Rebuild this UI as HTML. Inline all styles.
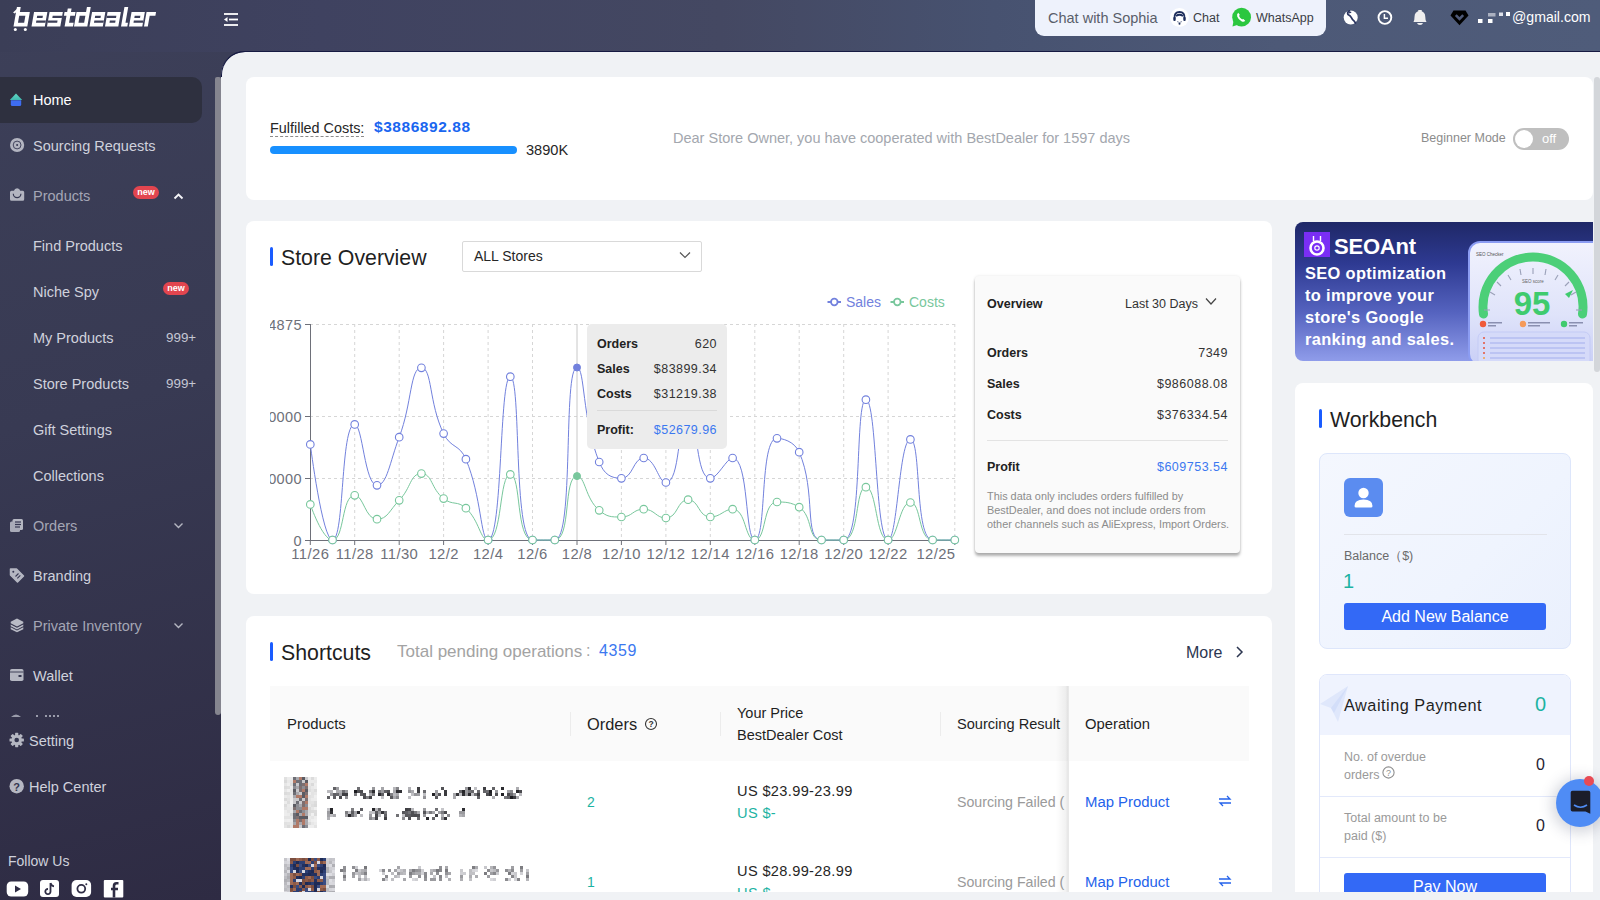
<!DOCTYPE html>
<html><head><meta charset="utf-8">
<style>
*{box-sizing:border-box;margin:0;padding:0}
html,body{width:1600px;height:900px;overflow:hidden;font-family:"Liberation Sans",sans-serif;background:#f0f2f5}
.abs{position:absolute}
#side{position:absolute;left:0;top:0;width:221px;height:900px;background:linear-gradient(165deg,#3d4059 0%,#383a53 45%,#2e2b43 100%)}
#head{position:absolute;left:0;top:0;width:1600px;height:52px;background:linear-gradient(90deg,#3b3e57 0%,#3f4260 20%,#444862 45%,#475270 62%,#4d5977 80%,#4f5c7a 100%)}
#main{position:absolute;left:221px;top:51px;width:1379px;height:849px;background:#f0f2f5;border-top-left-radius:24px;border-top:1px solid #161a42}
.card{position:absolute;background:#fff;border-radius:8px}
.nav{position:absolute;left:33px;font-size:14.5px;color:#cfd1dc;white-space:nowrap;line-height:18px}
.t{position:absolute;white-space:nowrap;line-height:1}
.ttl{position:absolute;font-size:21.3px;color:#1f1f1f;line-height:1;white-space:nowrap}
.bar{position:absolute;width:3px;height:19px;background:#1a5cff;border-radius:1.5px;margin-top:1px}
</style></head>
<body>
<div class="abs" style="left:190px;top:40px;width:80px;height:60px;background:#3b3e57"></div>
<div id="side"></div>
<div id="head"></div>
<div id="main"></div>
<div class="abs" style="left:221px;top:51px;width:40px;height:26px;border-top:1px solid #161a42;border-left:1px solid #161a42;border-top-left-radius:24px"></div>

<!-- sidebar -->
<div class="abs" style="left:0;top:77px;width:202px;height:46px;background:#2e303f;border-radius:0 10px 10px 0"></div>
<div class="nav" style="top:91px;color:#fff">Home</div>
<div class="nav" style="top:137px">Sourcing Requests</div>
<div class="nav" style="top:187px;color:#a4a6b5">Products</div>
<div class="nav" style="top:237px">Find Products</div>
<div class="nav" style="top:283px">Niche Spy</div>
<div class="nav" style="top:329px">My Products</div>
<div class="nav" style="top:375px">Store Products</div>
<div class="nav" style="top:421px">Gift Settings</div>
<div class="nav" style="top:467px">Collections</div>
<div class="nav" style="top:517px;color:#a4a6b5">Orders</div>
<div class="nav" style="top:567px">Branding</div>
<div class="nav" style="top:617px;color:#a4a6b5">Private Inventory</div>
<div class="nav" style="top:667px">Wallet</div>
<div class="nav" style="top:732px;left:29px">Setting</div>
<div class="nav" style="top:778px;left:29px">Help Center</div>
<div class="nav" style="top:852px;left:8px;font-size:14px">Follow Us</div>
<div class="abs" style="left:215px;top:77px;width:6px;height:638px;background:#85858f;border-radius:2px 2px 3px 3px"></div>


<!-- sidebar icons -->
<svg class="abs" style="left:0;top:0" width="221" height="900">
 <defs><linearGradient id="roof" x1="0" y1="0" x2="0" y2="1"><stop offset="0" stop-color="#62d6c2"/><stop offset="1" stop-color="#3fb9b0"/></linearGradient></defs>
 <path d="M16,93.6 L22.2,100 L9.8,100 Z" fill="url(#roof)"/>
 <path d="M10.8,100.3 H21.2 V104.5 Q21.2,106 19.7,106 H12.3 Q10.8,106 10.8,104.5 Z" fill="#3e6df2"/>
 <circle cx="17.1" cy="145" r="7.1" fill="#b3b5c1"/>
 <circle cx="17.1" cy="145" r="3.9" fill="none" stroke="#363852" stroke-width="0.9"/>
 <circle cx="17.1" cy="145" r="1" fill="#363852"/>
 <path d="M10,192.3 Q10,190.8 11.5,190.8 H14 Q14.5,188.3 17.1,188.3 Q19.7,188.3 20.2,190.8 H22.7 Q24.2,190.8 24.2,192.3 V199.3 Q24.2,200.8 22.7,200.8 H11.5 Q10,200.8 10,199.3 Z" fill="#b3b5c1"/>
 <path d="M13.3,193.8 A3.8,3.8 0 0 0 20.9,193.8" fill="none" stroke="#363852" stroke-width="1.2"/>
 <!-- orders -->
 <g fill="#b5b7c2">
  <rect x="12.5" y="519" width="10.5" height="11" rx="1.5"/>
  <rect x="10" y="521.5" width="10" height="10.5" rx="1.5" fill="#a9abb8"/>
 </g>
 <g stroke="#363852" stroke-width="1.2"><line x1="15" y1="522" x2="21" y2="522"/><line x1="15" y1="524.5" x2="21" y2="524.5"/><line x1="15" y1="527" x2="20" y2="527"/></g>
 <!-- branding tag -->
 <path d="M10.5,569 H16.5 L23.5,576 L17.5,582 L10.5,575 Z" fill="#b5b7c2" stroke="#b5b7c2" stroke-width="1.5" stroke-linejoin="round"/>
 <g stroke="#363852" stroke-width="1.1"><line x1="15.5" y1="576.5" x2="18.5" y2="573.5"/><line x1="17.3" y1="578.3" x2="20.3" y2="575.3"/></g>
 <circle cx="13.3" cy="571.8" r="1" fill="#363852"/>
 <!-- layers -->
 <g fill="#b9bbc6">
  <path d="M10.7,627.3 L17,630.5 L23.3,627.3 V629.2 L17,632.3 L10.7,629.2 Z"/>
  <path d="M10.7,624.5 L17,627.7 L23.3,624.5 V626.3 L17,629.5 L10.7,626.3 Z"/>
  <path d="M17,618.6 L23.3,621.8 V623.3 L17,626.5 L10.7,623.3 V621.8 Z"/>
 </g>
 <!-- wallet -->
 <rect x="10" y="669" width="13.5" height="12" rx="1.8" fill="#b5b7c2"/>
 <line x1="10" y1="672" x2="23.5" y2="672" stroke="#34364f" stroke-width="0.9"/>
 <rect x="18.5" y="675" width="3" height="2" fill="#34364f"/>
 <!-- clipped item -->
 <path d="M11,717 Q16,712 21,717 Z" fill="#9a9cab"/>
 <g fill="#9a9cab"><rect x="36" y="715" width="2" height="2"/><rect x="45" y="715" width="2" height="2"/><rect x="49" y="715" width="2" height="2"/><rect x="53" y="715" width="2" height="2"/><rect x="57" y="715" width="2" height="2"/></g>
 <!-- gear -->
 <g transform="translate(16.7,740)">
  <g fill="#b5b7c2">
   <circle r="5.2"/>
   <rect x="-1.6" y="-7.2" width="3.2" height="14.4" rx="0.6"/>
   <rect x="-1.6" y="-7.2" width="3.2" height="14.4" rx="0.6" transform="rotate(45)"/>
   <rect x="-1.6" y="-7.2" width="3.2" height="14.4" rx="0.6" transform="rotate(90)"/>
   <rect x="-1.6" y="-7.2" width="3.2" height="14.4" rx="0.6" transform="rotate(135)"/>
  </g>
  <circle r="2.3" fill="#34364f"/>
 </g>
 <circle cx="16.7" cy="786.2" r="7.2" fill="#b5b7c2"/>
 <text x="16.7" y="790.6" font-family="Liberation Sans" font-weight="bold" font-size="11" fill="#34364f" text-anchor="middle">?</text>
 <!-- social -->
 <rect x="6.7" y="881.5" width="21.5" height="15" rx="4.5" fill="#fff"/>
 <path d="M15,885.5 L21,889 L15,892.5 Z" fill="#2f2d45"/>
 <rect x="40" y="880" width="19" height="17" rx="3" fill="#fff"/>
 <path d="M50.5,883 V891.5 A2.6,2.6 0 1 1 48,889 M50.5,883 Q51.2,886 54,886.3" fill="none" stroke="#2f2d45" stroke-width="1.8"/>
 <rect x="71.6" y="880" width="19.5" height="17" rx="5" fill="#fff"/>
 <circle cx="81.3" cy="888.8" r="3.9" fill="none" stroke="#2f2d45" stroke-width="1.8"/>
 <circle cx="86.3" cy="884.2" r="1" fill="#2f2d45"/>
 <rect x="103.8" y="880" width="19.5" height="17.5" rx="1" fill="#fff"/>
 <path d="M118.5,883.2 H116.5 Q114,883.2 114,886 V897.5 M111,889 H118" fill="none" stroke="#2f2d45" stroke-width="2.6"/>
 <!-- chevrons -->
 <g fill="none" stroke="#f4f4f8" stroke-width="1.9">
  <path d="M174.5,198.5 L178.5,194.5 L182.5,198.5"/>
 </g>
 <g fill="none" stroke="#b5b7c2" stroke-width="1.4">
  <path d="M174.5,523.5 L178.5,527.5 L182.5,523.5"/>
  <path d="M174.5,623.5 L178.5,627.5 L182.5,623.5"/>
 </g>
 <!-- menu fold -->
</svg>
<div class="abs" style="left:133px;top:186px;width:26px;height:13px;background:#e2454f;border-radius:7px;color:#fff;font-size:9px;line-height:12px;text-align:center;font-weight:bold">new</div>
<div class="abs" style="left:163px;top:282px;width:26px;height:13px;background:#e2454f;border-radius:7px;color:#fff;font-size:9px;line-height:12px;text-align:center;font-weight:bold">new</div>
<div class="t" style="left:166px;top:331px;font-size:13.4px;color:#c5c7d3">999+</div>
<div class="t" style="left:166px;top:377px;font-size:13.4px;color:#c5c7d3">999+</div>

<!-- header -->
<svg class="abs" style="left:0;top:0" width="165" height="36">
 <g transform="translate(0,26.5) skewX(-10) translate(0,-26.5)">
  <path d="M13.50,7.00H17.30V26.50H13.50ZM13.50,12.00H27.30V26.50H13.50ZM31.50,12.00H44.80V26.50H31.50ZM47.00,12.00H60.30V26.50H47.00ZM64.60,8.50H68.40V26.50H64.60ZM62.00,12.00H73.00V15.80H62.00ZM64.60,22.70H73.00V26.50H64.60ZM83.50,7.00H87.30V26.50H83.50ZM74.00,12.00H87.30V26.50H74.00ZM89.50,12.00H102.80V26.50H89.50ZM105.00,12.00H118.30V26.50H105.00ZM121.00,7.00H124.80V26.50H121.00ZM121.00,22.70H127.30V26.50H121.00ZM129.00,12.00H142.30V26.50H129.00ZM144.00,12.00H147.80V26.50H144.00ZM144.00,12.00H153.50V15.80H144.00Z" fill="#fff"/>
  <path d="M17.30,15.80H23.50V22.70H17.30ZM35.30,15.80H41.00V17.90H35.30ZM35.30,20.50H44.80V22.70H35.30ZM50.80,15.80H60.30V17.90H50.80ZM47.00,20.50H56.50V22.70H47.00ZM77.80,15.80H83.50V22.70H77.80ZM93.30,15.80H99.00V17.90H93.30ZM93.30,20.50H102.80V22.70H93.30ZM105.00,15.80H114.50V17.90H105.00ZM108.80,20.50H114.50V22.70H108.80ZM132.80,15.80H138.50V17.90H132.80ZM132.80,20.50H142.30V22.70H132.80Z" fill="#3c3f58"/>
  <path d="M10.6,12.6 L14.2,8.4 L14.2,11.8 L12.4,13.6 Z" fill="#fff"/>
 </g>
 <circle cx="15.3" cy="29.6" r="1.5" fill="#fff"/><circle cx="25.3" cy="29.6" r="1.5" fill="#fff"/>
</svg>
<svg class="abs" style="left:222px;top:11px" width="20" height="18">
 <g stroke="#fff" stroke-width="1.8" fill="none">
  <line x1="2" y1="3" x2="16" y2="3"/><line x1="7" y1="8.5" x2="16" y2="8.5"/><line x1="2" y1="14" x2="16" y2="14"/>
 </g>
 <path d="M2,8.5 L5.5,6 V11 Z" fill="#fff"/>
</svg>
<div class="abs" style="left:1035px;top:-8px;width:291px;height:44px;background:#eef2fc;border-radius:9px"></div>
<div class="t" style="left:1048px;top:11px;font-size:14.5px;color:#595e6a">Chat with Sophia</div>
<svg class="abs" style="left:1168px;top:6px" width="90" height="24">
 <circle cx="11.5" cy="11.5" r="9.4" fill="#fff"/>
 <path d="M6.5,12.5 Q6,6 11.5,6 Q17,6 16.5,12.5" fill="none" stroke="#1f2f5c" stroke-width="1.8"/>
 <path d="M8,10 Q11.5,7.5 15,10" fill="none" stroke="#1f2f5c" stroke-width="2"/>
 <rect x="5.3" y="11" width="2.4" height="4" rx="1" fill="#1f2f5c"/><rect x="15.3" y="11" width="2.4" height="4" rx="1" fill="#1f2f5c"/>
 <path d="M9,15.5 Q11.5,17.5 14,15.5" fill="none" stroke="#8a93aa" stroke-width="1"/>
 <circle cx="11.5" cy="17.8" r="1" fill="#1f2f5c"/>
 <circle cx="73.6" cy="11.2" r="9.4" fill="#2bc73f"/>
 <path d="M65.5,15 L64.5,20.5 L70,18.8 Z" fill="#2bc73f"/>
 <path d="M70.2,6.8 Q68.6,8 69.2,10.4 Q70.4,13.8 73.8,15.6 Q76.2,16.4 77.2,14.8 L75.4,13 Q74.4,13.6 73.6,13 Q71.8,11.8 71.2,10.2 Q71,9.4 71.8,8.8 Z" fill="#fff"/>
</svg>
<div class="t" style="left:1193px;top:12px;font-size:12.5px;color:#3a3d45">Chat</div>
<div class="t" style="left:1256px;top:12px;font-size:12.5px;color:#3a3d45">WhatsApp</div>
<svg class="abs" style="left:1335px;top:0" width="140" height="35">
 <circle cx="15.7" cy="17.5" r="7" fill="#fff"/>
 <path d="M14.5,10.8 Q11.8,12.5 13,14.6 Q15.5,15.8 16.4,17.6 Q17.2,19.5 19.2,21.2 L20.5,23" fill="none" stroke="#2b3560" stroke-width="1.7" stroke-linecap="round"/><path d="M14,12.8 L16.2,12.2" stroke="#2b3560" stroke-width="1.2"/>
 <circle cx="49.9" cy="17.5" r="6.4" fill="none" stroke="#fff" stroke-width="1.9"/>
 <path d="M49.4,14 V18.3 H53" fill="none" stroke="#fff" stroke-width="1.5"/>
 <path d="M78.5,22 Q79.5,20.5 79.5,17 Q79.5,11.5 84.9,11 Q90.3,11.5 90.3,17 Q90.3,20.5 91.5,22 Z" fill="#eeeeee"/>
 <rect x="83" y="10" width="4" height="2" rx="1" fill="#eeeeee"/>
 <path d="M82,23 H88 Q87.5,25 85,25 Q82.5,25 82,23 Z" fill="#eeeeee"/>
 <path d="M118.5,10.5 H130.5 L133.5,15.5 L124.5,25.2 L115.5,15.5 Z" fill="#000"/>
 <path d="M120.8,15.2 L124.5,19 L128.2,15.2" fill="none" stroke="#4f5a78" stroke-width="2.6"/>
</svg>
<svg class="abs" style="left:1470px;top:0" width="45" height="35">
 <rect x="8" y="19" width="4.5" height="4" fill="#fff"/>
 <rect x="18" y="19" width="4.5" height="4" fill="#fff"/>
 <rect x="18" y="13" width="7.5" height="3.5" fill="#aab0c0"/>
 <rect x="29" y="12.5" width="4" height="3.5" fill="#dfe2ea"/>
 <rect x="36" y="12" width="4" height="4" fill="#fff"/>
</svg>
<div class="t" style="left:1512px;top:10px;font-size:14.1px;color:#fff">@gmail.com</div>

<!-- top card -->
<div class="card" style="left:246px;top:77px;width:1347px;height:123px"></div>
<div class="t" style="left:270px;top:121px;font-size:14.4px;color:#262626;border-bottom:1px dashed #8c8c8c;padding-bottom:1px">Fulfilled Costs:</div>
<div class="t" style="left:374px;top:119px;font-size:15.5px;color:#1a66f0;font-weight:bold;letter-spacing:0.55px">$3886892.88</div>
<div class="abs" style="left:270px;top:146px;width:247px;height:8px;background:#1890ff;border-radius:4px"></div>
<div class="t" style="left:526px;top:143px;font-size:14.6px;color:#262626">3890K</div>
<div class="t" style="left:673px;top:131px;font-size:14.5px;color:#a3a7ae">Dear Store Owner, you have cooperated with BestDealer for 1597 days</div>
<div class="t" style="left:1421px;top:132px;font-size:12.5px;color:#8c8c8c">Beginner Mode</div>
<div class="abs" style="left:1513px;top:128px;width:56px;height:22px;background:#bfbfbf;border-radius:11px"></div>
<div class="abs" style="left:1515px;top:130px;width:18px;height:18px;background:#fff;border-radius:50%"></div>
<div class="t" style="left:1542px;top:132px;font-size:13px;color:#fff">off</div>
<div class="abs" style="left:1594px;top:77px;width:6px;height:295px;background:#d3d6da;border-radius:3px"></div>

<!-- store overview -->
<div class="card" style="left:246px;top:221px;width:1026px;height:373px"></div>
<div class="bar" style="left:270px;top:246px"></div>
<div class="ttl" style="left:281px;top:248px">Store Overview</div>
<div class="abs" style="left:462px;top:241px;width:240px;height:31px;border:1px solid #d9d9d9;border-radius:2px"></div>
<div class="t" style="left:474px;top:249px;font-size:14px;color:#262626">ALL Stores</div>
<svg width="1600" height="900" style="position:absolute;left:0;top:0">
<g stroke="#d6d6d6" stroke-width="1" stroke-dasharray="3,3" fill="none">
<line x1="310" y1="324.5" x2="955" y2="324.5"/>
<line x1="310" y1="416.5" x2="955" y2="416.5"/>
<line x1="310" y1="478.5" x2="955" y2="478.5"/>
<line x1="354.7" y1="324" x2="354.7" y2="540"/>
<line x1="399.2" y1="324" x2="399.2" y2="540"/>
<line x1="443.6" y1="324" x2="443.6" y2="540"/>
<line x1="488.1" y1="324" x2="488.1" y2="540"/>
<line x1="532.5" y1="324" x2="532.5" y2="540"/>
<line x1="621.4" y1="324" x2="621.4" y2="540"/>
<line x1="665.9" y1="324" x2="665.9" y2="540"/>
<line x1="710.3" y1="324" x2="710.3" y2="540"/>
<line x1="754.8" y1="324" x2="754.8" y2="540"/>
<line x1="799.2" y1="324" x2="799.2" y2="540"/>
<line x1="843.7" y1="324" x2="843.7" y2="540"/>
<line x1="888.1" y1="324" x2="888.1" y2="540"/>
<line x1="954.8" y1="324" x2="954.8" y2="540"/>
</g>
<line x1="577.0" y1="324" x2="577.0" y2="540" stroke="#c8c8c8" stroke-width="1"/>
<g stroke="#6e7079" stroke-width="1" fill="none">
<line x1="310.5" y1="324" x2="310.5" y2="540"/>
<line x1="310" y1="540.5" x2="955" y2="540.5"/>
<line x1="305" y1="324.5" x2="310" y2="324.5"/>
<line x1="305" y1="416.5" x2="310" y2="416.5"/>
<line x1="305" y1="478.5" x2="310" y2="478.5"/>
<line x1="305" y1="540.5" x2="310" y2="540.5"/>
<line x1="310.3" y1="540" x2="310.3" y2="545"/>
<line x1="354.7" y1="540" x2="354.7" y2="545"/>
<line x1="399.2" y1="540" x2="399.2" y2="545"/>
<line x1="443.6" y1="540" x2="443.6" y2="545"/>
<line x1="488.1" y1="540" x2="488.1" y2="545"/>
<line x1="532.5" y1="540" x2="532.5" y2="545"/>
<line x1="577.0" y1="540" x2="577.0" y2="545"/>
<line x1="621.4" y1="540" x2="621.4" y2="545"/>
<line x1="665.9" y1="540" x2="665.9" y2="545"/>
<line x1="710.3" y1="540" x2="710.3" y2="545"/>
<line x1="754.8" y1="540" x2="754.8" y2="545"/>
<line x1="799.2" y1="540" x2="799.2" y2="545"/>
<line x1="843.7" y1="540" x2="843.7" y2="545"/>
<line x1="888.1" y1="540" x2="888.1" y2="545"/>
<line x1="954.8" y1="540" x2="954.8" y2="545"/>
</g>
<path d="M310.3,444.4C310.3,444.4 322.4,540.0 332.5,540.0C344.6,540.0 340.4,424.4 354.7,424.4C362.6,424.4 364.7,485.3 377.0,485.3C387.0,485.3 389.8,461.9 399.2,437.2C412.1,403.2 410.0,367.8 421.4,367.8C432.3,367.8 428.7,402.9 443.6,433.6C450.9,448.6 459.5,443.9 465.9,459.2C481.7,497.1 480.6,540.0 488.1,540.0C502.8,540.0 499.2,376.7 510.3,376.7C521.4,376.7 513.0,540.0 532.5,540.0C535.2,540.0 552.2,540.0 554.8,540.0C574.5,540.0 562.7,367.5 577.0,367.5C585.0,367.5 581.9,418.9 599.2,462.0C604.1,474.3 610.8,478.3 621.4,478.3C633.0,478.3 633.1,458.0 643.7,458.0C655.3,458.0 658.5,482.5 665.9,482.5C680.7,482.5 676.7,420.0 688.1,420.0C698.9,420.0 695.3,478.3 710.3,478.3C717.6,478.3 726.7,458.0 732.6,458.0C749.0,458.0 744.8,540.0 754.8,540.0C767.0,540.0 759.3,438.3 777.0,438.3C781.5,438.3 794.2,440.8 799.2,452.2C816.5,491.6 803.6,540.0 821.5,540.0C825.8,540.0 840.7,540.0 843.7,540.0C862.9,540.0 854.8,399.7 865.9,399.7C877.0,399.7 875.2,540.0 888.1,540.0C897.5,540.0 899.2,439.4 910.4,439.4C921.5,439.4 914.3,540.0 932.6,540.0C936.5,540.0 954.8,540.0 954.8,540.0" fill="none" stroke="#7281dd" stroke-width="1"/>
<path d="M310.3,504.4C310.3,504.4 322.4,540.0 332.5,540.0C344.6,540.0 341.3,495.3 354.7,495.3C363.5,495.3 365.2,519.2 377.0,519.2C387.5,519.2 389.1,510.7 399.2,500.3C411.3,487.9 410.1,473.6 421.4,473.6C432.3,473.6 430.8,488.6 443.6,498.6C453.0,505.9 457.3,500.2 465.9,508.2C479.6,520.9 480.1,540.0 488.1,540.0C502.3,540.0 499.2,474.4 510.3,474.4C521.4,474.4 515.7,540.0 532.5,540.0C537.9,540.0 549.3,540.0 554.8,540.0C571.5,540.0 563.1,476.1 577.0,476.1C585.3,476.1 585.1,498.5 599.2,510.3C607.3,517.0 610.4,517.0 621.4,517.0C632.6,517.0 632.6,509.2 643.7,509.2C654.9,509.2 655.8,518.0 665.9,518.0C678.0,518.0 676.9,499.7 688.1,499.7C699.1,499.7 698.2,517.0 710.3,517.0C720.5,517.0 724.1,509.2 732.6,509.2C746.3,509.2 744.5,540.0 754.8,540.0C766.7,540.0 762.4,502.0 777.0,502.0C784.6,502.0 791.1,502.0 799.2,507.2C813.3,516.2 807.2,540.0 821.5,540.0C829.4,540.0 837.5,540.0 843.7,540.0C859.7,540.0 854.8,487.2 865.9,487.2C877.0,487.2 875.5,540.0 888.1,540.0C897.7,540.0 899.2,502.5 910.4,502.5C921.5,502.5 917.9,540.0 932.6,540.0C940.1,540.0 954.8,540.0 954.8,540.0" fill="none" stroke="#78c79c" stroke-width="1"/>
<circle cx="310.3" cy="444.4" r="3.8" fill="#fff" stroke="#7281dd" stroke-width="1.1"/>
<circle cx="332.5" cy="540.0" r="3.8" fill="#fff" stroke="#7281dd" stroke-width="1.1"/>
<circle cx="354.7" cy="424.4" r="3.8" fill="#fff" stroke="#7281dd" stroke-width="1.1"/>
<circle cx="377.0" cy="485.3" r="3.8" fill="#fff" stroke="#7281dd" stroke-width="1.1"/>
<circle cx="399.2" cy="437.2" r="3.8" fill="#fff" stroke="#7281dd" stroke-width="1.1"/>
<circle cx="421.4" cy="367.8" r="3.8" fill="#fff" stroke="#7281dd" stroke-width="1.1"/>
<circle cx="443.6" cy="433.6" r="3.8" fill="#fff" stroke="#7281dd" stroke-width="1.1"/>
<circle cx="465.9" cy="459.2" r="3.8" fill="#fff" stroke="#7281dd" stroke-width="1.1"/>
<circle cx="488.1" cy="540.0" r="3.8" fill="#fff" stroke="#7281dd" stroke-width="1.1"/>
<circle cx="510.3" cy="376.7" r="3.8" fill="#fff" stroke="#7281dd" stroke-width="1.1"/>
<circle cx="532.5" cy="540.0" r="3.8" fill="#fff" stroke="#7281dd" stroke-width="1.1"/>
<circle cx="554.8" cy="540.0" r="3.8" fill="#fff" stroke="#7281dd" stroke-width="1.1"/>
<circle cx="577.0" cy="367.5" r="3.5" fill="#7281dd" stroke="#7281dd" stroke-width="1"/>
<circle cx="599.2" cy="462.0" r="3.8" fill="#fff" stroke="#7281dd" stroke-width="1.1"/>
<circle cx="621.4" cy="478.3" r="3.8" fill="#fff" stroke="#7281dd" stroke-width="1.1"/>
<circle cx="643.7" cy="458.0" r="3.8" fill="#fff" stroke="#7281dd" stroke-width="1.1"/>
<circle cx="665.9" cy="482.5" r="3.8" fill="#fff" stroke="#7281dd" stroke-width="1.1"/>
<circle cx="688.1" cy="420.0" r="3.8" fill="#fff" stroke="#7281dd" stroke-width="1.1"/>
<circle cx="710.3" cy="478.3" r="3.8" fill="#fff" stroke="#7281dd" stroke-width="1.1"/>
<circle cx="732.6" cy="458.0" r="3.8" fill="#fff" stroke="#7281dd" stroke-width="1.1"/>
<circle cx="754.8" cy="540.0" r="3.8" fill="#fff" stroke="#7281dd" stroke-width="1.1"/>
<circle cx="777.0" cy="438.3" r="3.8" fill="#fff" stroke="#7281dd" stroke-width="1.1"/>
<circle cx="799.2" cy="452.2" r="3.8" fill="#fff" stroke="#7281dd" stroke-width="1.1"/>
<circle cx="821.5" cy="540.0" r="3.8" fill="#fff" stroke="#7281dd" stroke-width="1.1"/>
<circle cx="843.7" cy="540.0" r="3.8" fill="#fff" stroke="#7281dd" stroke-width="1.1"/>
<circle cx="865.9" cy="399.7" r="3.8" fill="#fff" stroke="#7281dd" stroke-width="1.1"/>
<circle cx="888.1" cy="540.0" r="3.8" fill="#fff" stroke="#7281dd" stroke-width="1.1"/>
<circle cx="910.4" cy="439.4" r="3.8" fill="#fff" stroke="#7281dd" stroke-width="1.1"/>
<circle cx="932.6" cy="540.0" r="3.8" fill="#fff" stroke="#7281dd" stroke-width="1.1"/>
<circle cx="954.8" cy="540.0" r="3.8" fill="#fff" stroke="#7281dd" stroke-width="1.1"/>
<circle cx="310.3" cy="504.4" r="3.8" fill="#fff" stroke="#78c79c" stroke-width="1.1"/>
<circle cx="332.5" cy="540.0" r="3.8" fill="#fff" stroke="#78c79c" stroke-width="1.1"/>
<circle cx="354.7" cy="495.3" r="3.8" fill="#fff" stroke="#78c79c" stroke-width="1.1"/>
<circle cx="377.0" cy="519.2" r="3.8" fill="#fff" stroke="#78c79c" stroke-width="1.1"/>
<circle cx="399.2" cy="500.3" r="3.8" fill="#fff" stroke="#78c79c" stroke-width="1.1"/>
<circle cx="421.4" cy="473.6" r="3.8" fill="#fff" stroke="#78c79c" stroke-width="1.1"/>
<circle cx="443.6" cy="498.6" r="3.8" fill="#fff" stroke="#78c79c" stroke-width="1.1"/>
<circle cx="465.9" cy="508.2" r="3.8" fill="#fff" stroke="#78c79c" stroke-width="1.1"/>
<circle cx="488.1" cy="540.0" r="3.8" fill="#fff" stroke="#78c79c" stroke-width="1.1"/>
<circle cx="510.3" cy="474.4" r="3.8" fill="#fff" stroke="#78c79c" stroke-width="1.1"/>
<circle cx="532.5" cy="540.0" r="3.8" fill="#fff" stroke="#78c79c" stroke-width="1.1"/>
<circle cx="554.8" cy="540.0" r="3.8" fill="#fff" stroke="#78c79c" stroke-width="1.1"/>
<circle cx="577.0" cy="476.1" r="3.5" fill="#78c79c" stroke="#78c79c" stroke-width="1"/>
<circle cx="599.2" cy="510.3" r="3.8" fill="#fff" stroke="#78c79c" stroke-width="1.1"/>
<circle cx="621.4" cy="517.0" r="3.8" fill="#fff" stroke="#78c79c" stroke-width="1.1"/>
<circle cx="643.7" cy="509.2" r="3.8" fill="#fff" stroke="#78c79c" stroke-width="1.1"/>
<circle cx="665.9" cy="518.0" r="3.8" fill="#fff" stroke="#78c79c" stroke-width="1.1"/>
<circle cx="688.1" cy="499.7" r="3.8" fill="#fff" stroke="#78c79c" stroke-width="1.1"/>
<circle cx="710.3" cy="517.0" r="3.8" fill="#fff" stroke="#78c79c" stroke-width="1.1"/>
<circle cx="732.6" cy="509.2" r="3.8" fill="#fff" stroke="#78c79c" stroke-width="1.1"/>
<circle cx="754.8" cy="540.0" r="3.8" fill="#fff" stroke="#78c79c" stroke-width="1.1"/>
<circle cx="777.0" cy="502.0" r="3.8" fill="#fff" stroke="#78c79c" stroke-width="1.1"/>
<circle cx="799.2" cy="507.2" r="3.8" fill="#fff" stroke="#78c79c" stroke-width="1.1"/>
<circle cx="821.5" cy="540.0" r="3.8" fill="#fff" stroke="#78c79c" stroke-width="1.1"/>
<circle cx="843.7" cy="540.0" r="3.8" fill="#fff" stroke="#78c79c" stroke-width="1.1"/>
<circle cx="865.9" cy="487.2" r="3.8" fill="#fff" stroke="#78c79c" stroke-width="1.1"/>
<circle cx="888.1" cy="540.0" r="3.8" fill="#fff" stroke="#78c79c" stroke-width="1.1"/>
<circle cx="910.4" cy="502.5" r="3.8" fill="#fff" stroke="#78c79c" stroke-width="1.1"/>
<circle cx="932.6" cy="540.0" r="3.8" fill="#fff" stroke="#78c79c" stroke-width="1.1"/>
<circle cx="954.8" cy="540.0" r="3.8" fill="#fff" stroke="#78c79c" stroke-width="1.1"/>
<defs><clipPath id="yc"><rect x="270" y="300" width="40" height="260"/></clipPath></defs>
<g font-family="Liberation Sans" font-size="14.5" fill="#6e7079" letter-spacing="0.4" clip-path="url(#yc)" text-anchor="end">
<text x="302" y="329.5">174875</text>
<text x="302" y="421.5">100000</text>
<text x="302" y="483.5">50000</text>
<text x="302" y="545.5">0</text>
</g>
<g font-family="Liberation Sans" font-size="14.8" fill="#6e7079" letter-spacing="0.4" text-anchor="middle">
<text x="310.3" y="558.5">11/26</text>
<text x="354.7" y="558.5">11/28</text>
<text x="399.2" y="558.5">11/30</text>
<text x="443.6" y="558.5">12/2</text>
<text x="488.1" y="558.5">12/4</text>
<text x="532.5" y="558.5">12/6</text>
<text x="577.0" y="558.5">12/8</text>
<text x="621.4" y="558.5">12/10</text>
<text x="665.9" y="558.5">12/12</text>
<text x="710.3" y="558.5">12/14</text>
<text x="754.8" y="558.5">12/16</text>
<text x="799.2" y="558.5">12/18</text>
<text x="843.7" y="558.5">12/20</text>
<text x="888.1" y="558.5">12/22</text>
<text x="955.5" y="558.5" text-anchor="end">12/25</text>
</g>
</svg>


<svg class="abs" style="left:678px;top:250px" width="14" height="10"><path d="M2,2.5 L7,7.5 L12,2.5" fill="none" stroke="#555" stroke-width="1.2"/></svg>
<!-- legend -->
<svg class="abs" style="left:826px;top:294px" width="125" height="16">
 <line x1="1.5" y1="8" x2="15" y2="8" stroke="#7281dd" stroke-width="2"/><circle cx="8.3" cy="8" r="3.3" fill="#fff" stroke="#7281dd" stroke-width="1.8"/>
 <line x1="64.5" y1="8" x2="78" y2="8" stroke="#78c79c" stroke-width="2"/><circle cx="71.3" cy="8" r="3.3" fill="#fff" stroke="#78c79c" stroke-width="1.8"/>
</svg>
<div class="t" style="left:846px;top:295px;font-size:14px;color:#7281dd">Sales</div>
<div class="t" style="left:909px;top:295px;font-size:14px;color:#78c79c">Costs</div>
<!-- tooltip -->
<div class="abs" style="left:587px;top:324px;width:140px;height:125px;background:#ececec;border-radius:5px"></div>
<div class="t" style="left:597px;top:338px;font-size:12.5px;font-weight:bold;color:#222">Orders</div>
<div class="t" style="left:597px;top:363px;font-size:12.5px;font-weight:bold;color:#222">Sales</div>
<div class="t" style="left:597px;top:388px;font-size:12.5px;font-weight:bold;color:#222">Costs</div>
<div class="t" style="left:597px;top:424px;font-size:12.5px;font-weight:bold;color:#222">Profit:</div>
<div class="t" style="right:883px;top:338px;font-size:12.5px;color:#333;letter-spacing:0.45px">620</div>
<div class="t" style="right:883px;top:363px;font-size:12.5px;color:#333;letter-spacing:0.45px">$83899.34</div>
<div class="t" style="right:883px;top:388px;font-size:12.5px;color:#333;letter-spacing:0.45px">$31219.38</div>
<div class="t" style="right:883px;top:424px;font-size:12.5px;color:#3b78f0;letter-spacing:0.45px">$52679.96</div>
<div class="abs" style="left:597px;top:410px;width:120px;height:1px;background:#dadada"></div>
<!-- overview panel -->
<div class="abs" style="left:975px;top:276px;width:265px;height:277px;background:#fafafa;border-radius:4px;box-shadow:0 3px 3px rgba(0,0,0,0.3),0 0 3px rgba(0,0,0,0.1)"></div>
<div class="t" style="left:987px;top:298px;font-size:12.5px;font-weight:bold;color:#222">Overview</div>
<div class="t" style="left:1125px;top:298px;font-size:12.5px;color:#333">Last 30 Days</div>
<svg class="abs" style="left:1204px;top:297px" width="14" height="10"><path d="M2,1.5 L7,7 L12,1.5" fill="none" stroke="#444" stroke-width="1.2"/></svg>
<div class="t" style="left:987px;top:347px;font-size:12.5px;font-weight:bold;color:#222">Orders</div>
<div class="t" style="left:987px;top:378px;font-size:12.5px;font-weight:bold;color:#222">Sales</div>
<div class="t" style="left:987px;top:409px;font-size:12.5px;font-weight:bold;color:#222">Costs</div>
<div class="t" style="left:987px;top:461px;font-size:12.5px;font-weight:bold;color:#222">Profit</div>
<div class="t" style="right:372px;top:347px;font-size:12.5px;color:#333;letter-spacing:0.5px">7349</div>
<div class="t" style="right:372px;top:378px;font-size:12.5px;color:#333;letter-spacing:0.5px">$986088.08</div>
<div class="t" style="right:372px;top:409px;font-size:12.5px;color:#333;letter-spacing:0.5px">$376334.54</div>
<div class="t" style="right:372px;top:461px;font-size:12.5px;color:#3b78f0;letter-spacing:0.5px">$609753.54</div>
<div class="abs" style="left:987px;top:440px;width:241px;height:1px;background:#e3e3e3"></div>
<div class="abs" style="left:987px;top:489px;width:260px;font-size:10.9px;line-height:14px;color:#8c8c8c">This data only includes orders fulfilled by<br>BestDealer, and does not include orders from<br>other channels such as AliExpress, Import Orders.</div>

<!-- right column -->
<div class="abs" style="left:1295px;top:222px;width:298px;height:139px;border-radius:8px 0 0 8px;overflow:hidden;background:linear-gradient(180deg,#1f2867 0%,#2e3a92 30%,#5563bf 65%,#8f9cea 100%)">
 <div class="abs" style="left:173px;top:19px;width:140px;height:125px;background:linear-gradient(180deg,#f1f2fd 0%,#dfe3fa 60%,#c9cff6 100%);border:2px solid #8b9cf2;border-radius:12px"></div>
 <svg class="abs" style="left:0;top:0" width="298" height="139">
  <rect x="9" y="10" width="26" height="25" fill="#7a2ef5"/>
  <circle cx="22" cy="26" r="6.5" fill="none" stroke="#fff" stroke-width="2.6"/>
  <circle cx="22" cy="26" r="2.2" fill="none" stroke="#fff" stroke-width="1.2"/>
  <line x1="18.5" y1="14" x2="18.5" y2="19" stroke="#fff" stroke-width="1.4"/><line x1="25.5" y1="14" x2="25.5" y2="19" stroke="#fff" stroke-width="1.4"/>
  <g font-family="Liberation Sans" font-weight="bold" fill="#fff">
   <text x="39" y="32" font-size="22" letter-spacing="-0.2">SEOAnt</text>
   <g font-size="16.4" letter-spacing="0.35">
   <text x="10" y="57">SEO optimization</text>
   <text x="10" y="79">to improve your</text>
   <text x="10" y="101">store's Google</text>
   <text x="10" y="123">ranking and sales.</text>
   </g>
  </g>
  <text x="181" y="34" font-family="Liberation Sans" font-size="4.5" fill="#555">SEO Checker</text>
  <path d="M188.5,92 A50,50 0 1 1 287.5,92" fill="none" stroke="#4ccf78" stroke-width="9" stroke-linecap="round"/>
  <g stroke="#9aa0b8" stroke-width="1.1">
   <line x1="238" y1="46" x2="238" y2="52"/><line x1="213" y1="53" x2="216" y2="58"/><line x1="263" y1="53" x2="260" y2="58"/>
   <line x1="195" y1="70" x2="200" y2="73"/><line x1="281" y1="70" x2="276" y2="73"/><line x1="189" y1="88" x2="195" y2="88"/><line x1="287" y1="88" x2="281" y2="88"/>
   <line x1="225" y1="47" x2="226" y2="53"/><line x1="251" y1="47" x2="250" y2="53"/><line x1="202" y1="60" x2="206" y2="64"/><line x1="274" y1="60" x2="270" y2="64"/>
  </g>
  <path d="M270,72 L278,68 L274,76 Z" fill="#3fcb6e"/>
  <text x="237" y="92.5" font-family="Liberation Sans" font-weight="bold" font-size="33" fill="#3fcb6e" text-anchor="middle">95</text>
  <text x="238" y="61" font-family="Liberation Sans" font-size="4.5" fill="#666" text-anchor="middle">SEO score</text>
  <circle cx="188" cy="102" r="3.2" fill="#ef5a3a"/><circle cx="228" cy="102" r="3.2" fill="#f59a5a"/><circle cx="269" cy="102" r="3.2" fill="#3fcb6e"/>
  <g fill="#8a8fb0"><rect x="193" y="100" width="14" height="1.5"/><rect x="193" y="103" width="8" height="1.5"/><rect x="233" y="100" width="22" height="1.5"/><rect x="233" y="103" width="12" height="1.5"/><rect x="274" y="100" width="14" height="1.5"/><rect x="274" y="103" width="8" height="1.5"/></g>
  <rect x="183" y="110" width="112" height="34" rx="6" fill="#d5daf9" stroke="#c4cbf5"/>
  <g stroke="#b3bcf0" stroke-width="1.4"><line x1="195" y1="116" x2="290" y2="116"/><line x1="195" y1="121" x2="290" y2="121"/><line x1="195" y1="126" x2="290" y2="126"/><line x1="195" y1="131" x2="290" y2="131"/><line x1="195" y1="136" x2="290" y2="136"/></g>
  <g fill="#e5533a"><circle cx="189" cy="116" r="1"/><circle cx="189" cy="121" r="1"/><circle cx="189" cy="126" r="1"/><circle cx="189" cy="131" r="1"/><circle cx="189" cy="136" r="1" fill="#f0a050"/></g>
 </svg>
</div>
<div class="card" style="left:1295px;top:383px;width:298px;height:509px;border-radius:8px 8px 0 0"></div>
<div class="bar" style="left:1319px;top:408px"></div>
<div class="ttl" style="left:1330px;top:410px">Workbench</div>
<div class="abs" style="left:1319px;top:453px;width:252px;height:196px;background:linear-gradient(135deg,#f4f7fe 0%,#eff4fe 60%,#eaf0fd 100%);border:1px solid #dde6fb;border-radius:8px"></div>
<svg class="abs" style="left:1344px;top:478px" width="40" height="40">
 <rect width="39" height="39" rx="6" fill="#5b8cf0"/>
 <circle cx="19.5" cy="15" r="5.2" fill="#fff"/>
 <path d="M10.5,28 Q10.5,21.5 19.5,21.5 Q28.5,21.5 28.5,28 Q28.5,29.5 27,29.5 H12 Q10.5,29.5 10.5,28 Z" fill="#fff"/>
</svg>
<div class="abs" style="left:1344px;top:534px;width:203px;height:1px;background:#e2e4ea"></div>
<div class="t" style="left:1344px;top:550px;font-size:12.5px;color:#6b6b6b">Balance（$)</div>
<div class="t" style="left:1343px;top:571px;font-size:20px;color:#1db3a2">1</div>
<div class="abs" style="left:1344px;top:603px;width:202px;height:27px;background:#3369f6;border-radius:3px;color:#fff;font-size:16px;line-height:27px;text-align:center">Add New Balance</div>

<div class="abs" style="left:1319px;top:674px;width:252px;height:230px;background:#fff;border:1px solid #dfe6fb;border-radius:8px;overflow:hidden">
 <div class="abs" style="left:0;top:0;width:252px;height:60px;background:#eff3fe"></div>
 <div class="abs" style="left:0;top:121px;width:252px;height:1px;background:#e3e9fb"></div>
 <div class="abs" style="left:0;top:182px;width:252px;height:1px;background:#e3e9fb"></div>
</div>
<svg class="abs" style="left:1319px;top:685px" width="32" height="40"><path d="M29,1 L1,19 L12,23 L19,37 Z" fill="#dfe7fb"/><path d="M29,1 L12,23 L15,28 Z" fill="#d3def9"/></svg>
<div class="t" style="left:1344px;top:697px;font-size:16.3px;letter-spacing:0.5px;color:#1f1f1f">Awaiting Payment</div>
<div class="t" style="left:1535px;top:694px;font-size:20px;color:#1db3a2">0</div>
<div class="abs" style="left:1344px;top:748px;font-size:12.5px;line-height:18px;color:#9a9a9a">No. of overdue<br>orders</div>
<svg class="abs" style="left:1381px;top:765px" width="15" height="15"><circle cx="7.5" cy="7.5" r="5.6" fill="none" stroke="#8f8f8f" stroke-width="1.1"/><text x="7.5" y="10.8" font-family="Liberation Sans" font-size="9" fill="#8f8f8f" text-anchor="middle">?</text></svg>
<div class="t" style="left:1536px;top:757px;font-size:16px;color:#1f2233">0</div>
<div class="abs" style="left:1344px;top:809px;font-size:12.5px;line-height:18px;color:#9a9a9a">Total amount to be<br>paid ($)</div>
<div class="t" style="left:1536px;top:818px;font-size:16px;color:#1f2233">0</div>
<div class="abs" style="left:1344px;top:873px;width:202px;height:27px;background:#3369f6;border-radius:3px;color:#fff;font-size:16px;line-height:27px;text-align:center">Pay Now</div>
<!-- chat bubble -->
<div class="abs" style="left:1556px;top:779px;width:48px;height:48px;border-radius:50%;background:#4f8cf5;box-shadow:0 2px 14px 4px rgba(60,70,100,0.22)"></div>
<svg class="abs" style="left:1568px;top:788px" width="26" height="28"><path d="M2.7,4.5 Q2.7,2.7 4.5,2.7 H20.5 Q22.3,2.7 22.3,4.5 V25.8 L17.5,23.5 H4.5 Q2.7,23.5 2.7,21.7 Z" fill="#1b1d2a"/><path d="M6,17 Q12.5,21.5 19,17" fill="none" stroke="#4f8cf5" stroke-width="1.6"/></svg>
<div class="abs" style="left:1583.5px;top:775.5px;width:10px;height:10px;border-radius:50%;background:#e84b55"></div>
<!-- shortcuts -->
<div class="card" style="left:246px;top:616px;width:1026px;height:276px;border-radius:8px 8px 0 0"></div>
<div class="bar" style="left:270px;top:641px"></div>
<div class="ttl" style="left:281px;top:643px">Shortcuts</div>
<div class="t" style="left:397px;top:643px;font-size:17px;color:#a3a3a3">Total pending operations</div>
<div class="t" style="left:586px;top:643px;font-size:16px;color:#a3a3a3">:</div>
<div class="t" style="left:599px;top:643px;font-size:16px;color:#3b78f0;letter-spacing:0.6px">4359</div>
<div class="t" style="left:1186px;top:645px;font-size:16px;color:#2c3650">More</div>
<svg class="abs" style="left:1233px;top:644px" width="12" height="16"><path d="M4,3 L9,8 L4,13" fill="none" stroke="#2c3650" stroke-width="1.5"/></svg>
<div class="abs" style="left:270px;top:686px;width:978px;height:75px;background:#fafafa"></div>
<div class="abs" style="left:570px;top:712px;width:1px;height:24px;background:#ececec"></div>
<div class="abs" style="left:720px;top:712px;width:1px;height:24px;background:#ececec"></div>
<div class="abs" style="left:940px;top:712px;width:1px;height:24px;background:#ececec"></div>
<div class="t" style="left:287px;top:717px;font-size:14.9px;color:#1f1f1f">Products</div>
<div class="t" style="left:587px;top:716px;font-size:16.4px;color:#1f1f1f">Orders</div>
<svg class="abs" style="left:644px;top:717px" width="14" height="14"><circle cx="7" cy="7" r="5.5" fill="none" stroke="#333" stroke-width="1.1"/><text x="7" y="10.2" font-family="Liberation Sans" font-size="8.5" font-weight="bold" fill="#333" text-anchor="middle">?</text></svg>
<div class="t" style="left:737px;top:706px;font-size:14.5px;color:#1f1f1f">Your Price</div>
<div class="t" style="left:737px;top:728px;font-size:14.5px;color:#1f1f1f">BestDealer Cost</div>
<div class="t" style="left:957px;top:717px;font-size:14.6px;color:#1f1f1f">Sourcing Result</div>
<!-- rows -->
<div class="t" style="left:587px;top:795px;font-size:14px;color:#1db3a2">2</div>
<div class="t" style="left:737px;top:784px;font-size:14.6px;letter-spacing:0.35px;color:#262626">US $23.99-23.99</div>
<div class="t" style="left:737px;top:806px;font-size:14.6px;letter-spacing:0.35px;color:#1db3a2">US $-</div>
<div class="t" style="left:957px;top:795px;font-size:14.2px;color:#9a9a9a">Sourcing Failed (</div>
<div class="t" style="left:587px;top:875px;font-size:14px;color:#1db3a2">1</div>
<div class="t" style="left:737px;top:864px;font-size:14.6px;letter-spacing:0.35px;color:#262626">US $28.99-28.99</div>
<div class="t" style="left:737px;top:886px;font-size:14.6px;letter-spacing:0.35px;color:#1db3a2">US $</div>
<div class="t" style="left:957px;top:875px;font-size:14.2px;color:#9a9a9a">Sourcing Failed (</div>
<!-- operation fixed column -->
<div class="abs" style="left:1056px;top:686px;width:12px;height:215px;background:linear-gradient(90deg,rgba(0,0,0,0) 0%,rgba(0,0,0,0.05) 80%,rgba(0,0,0,0.1) 100%)"></div>
<div class="abs" style="left:1068px;top:686px;width:180px;height:215px;background:#fff;border-left:1px solid #e8e8e8">
 <div class="abs" style="left:0;top:0;width:180px;height:75px;background:#fafafa"></div>
</div>
<div class="t" style="left:1085px;top:717px;font-size:14.8px;color:#1f1f1f">Operation</div>
<div class="t" style="left:1085px;top:795px;font-size:14.9px;color:#2563eb">Map Product</div>
<div class="t" style="left:1085px;top:875px;font-size:14.9px;color:#2563eb">Map Product</div>
<svg class="abs" style="left:1217px;top:794px" width="16" height="14"><g fill="none" stroke="#2563eb" stroke-width="1.3"><path d="M2,5 H13 L10,2"/><path d="M14,9 H3 L6,12"/></g></svg>
<svg class="abs" style="left:1217px;top:874px" width="16" height="14"><g fill="none" stroke="#2563eb" stroke-width="1.3"><path d="M2,5 H13 L10,2"/><path d="M14,9 H3 L6,12"/></g></svg>
<!-- product thumbs (pixelated) -->
<svg class="abs" style="left:0;top:0" width="1600" height="900" shape-rendering="crispEdges">
<rect x="327" y="790" width="3" height="3" fill="rgb(186,186,190)"/>
<rect x="327" y="796" width="3" height="3" fill="rgb(95,95,99)"/>
<rect x="330" y="790" width="3" height="3" fill="rgb(180,180,184)"/>
<rect x="330" y="793" width="3" height="3" fill="rgb(154,154,158)"/>
<rect x="333" y="787" width="3" height="3" fill="rgb(98,98,102)"/>
<rect x="333" y="793" width="3" height="3" fill="rgb(95,95,99)"/>
<rect x="333" y="796" width="3" height="3" fill="rgb(95,95,99)"/>
<rect x="336" y="787" width="3" height="3" fill="rgb(157,157,161)"/>
<rect x="336" y="790" width="3" height="3" fill="rgb(172,172,176)"/>
<rect x="336" y="793" width="3" height="3" fill="rgb(103,103,107)"/>
<rect x="339" y="790" width="3" height="3" fill="rgb(177,177,181)"/>
<rect x="339" y="793" width="3" height="3" fill="rgb(163,163,167)"/>
<rect x="339" y="796" width="3" height="3" fill="rgb(73,73,77)"/>
<rect x="342" y="790" width="3" height="3" fill="rgb(110,110,114)"/>
<rect x="342" y="793" width="3" height="3" fill="rgb(62,62,66)"/>
<rect x="345" y="790" width="3" height="3" fill="rgb(152,152,156)"/>
<rect x="345" y="793" width="3" height="3" fill="rgb(62,62,66)"/>
<rect x="345" y="796" width="3" height="3" fill="rgb(143,143,147)"/>
<rect x="354" y="790" width="3" height="3" fill="rgb(28,28,32)"/>
<rect x="354" y="793" width="3" height="3" fill="rgb(123,123,127)"/>
<rect x="357" y="787" width="3" height="3" fill="rgb(111,111,115)"/>
<rect x="357" y="790" width="3" height="3" fill="rgb(81,81,85)"/>
<rect x="360" y="790" width="3" height="3" fill="rgb(76,76,80)"/>
<rect x="360" y="793" width="3" height="3" fill="rgb(96,96,100)"/>
<rect x="363" y="793" width="3" height="3" fill="rgb(82,82,86)"/>
<rect x="363" y="796" width="3" height="3" fill="rgb(75,75,79)"/>
<rect x="366" y="796" width="3" height="3" fill="rgb(129,129,133)"/>
<rect x="369" y="790" width="3" height="3" fill="rgb(116,116,120)"/>
<rect x="369" y="793" width="3" height="3" fill="rgb(175,175,179)"/>
<rect x="369" y="796" width="3" height="3" fill="rgb(64,64,68)"/>
<rect x="372" y="787" width="3" height="3" fill="rgb(152,152,156)"/>
<rect x="372" y="790" width="3" height="3" fill="rgb(46,46,50)"/>
<rect x="372" y="793" width="3" height="3" fill="rgb(118,118,122)"/>
<rect x="378" y="790" width="3" height="3" fill="rgb(124,124,128)"/>
<rect x="378" y="793" width="3" height="3" fill="rgb(44,44,48)"/>
<rect x="381" y="787" width="3" height="3" fill="rgb(165,165,169)"/>
<rect x="381" y="790" width="3" height="3" fill="rgb(155,155,159)"/>
<rect x="381" y="793" width="3" height="3" fill="rgb(94,94,98)"/>
<rect x="381" y="796" width="3" height="3" fill="rgb(194,194,198)"/>
<rect x="384" y="790" width="3" height="3" fill="rgb(98,98,102)"/>
<rect x="387" y="790" width="3" height="3" fill="rgb(80,80,84)"/>
<rect x="387" y="793" width="3" height="3" fill="rgb(42,42,46)"/>
<rect x="390" y="793" width="3" height="3" fill="rgb(127,127,131)"/>
<rect x="390" y="796" width="3" height="3" fill="rgb(87,87,91)"/>
<rect x="393" y="787" width="3" height="3" fill="rgb(183,183,187)"/>
<rect x="393" y="790" width="3" height="3" fill="rgb(167,167,171)"/>
<rect x="393" y="793" width="3" height="3" fill="rgb(186,186,190)"/>
<rect x="393" y="796" width="3" height="3" fill="rgb(169,169,173)"/>
<rect x="396" y="787" width="3" height="3" fill="rgb(133,133,137)"/>
<rect x="396" y="790" width="3" height="3" fill="rgb(46,46,50)"/>
<rect x="396" y="793" width="3" height="3" fill="rgb(169,169,173)"/>
<rect x="396" y="796" width="3" height="3" fill="rgb(135,135,139)"/>
<rect x="399" y="790" width="3" height="3" fill="rgb(50,50,54)"/>
<rect x="408" y="787" width="3" height="3" fill="rgb(177,177,181)"/>
<rect x="408" y="790" width="3" height="3" fill="rgb(149,149,153)"/>
<rect x="408" y="796" width="3" height="3" fill="rgb(191,191,195)"/>
<rect x="411" y="790" width="3" height="3" fill="rgb(170,170,174)"/>
<rect x="411" y="793" width="3" height="3" fill="rgb(190,190,194)"/>
<rect x="414" y="793" width="3" height="3" fill="rgb(150,150,154)"/>
<rect x="417" y="787" width="3" height="3" fill="rgb(63,63,67)"/>
<rect x="417" y="790" width="3" height="3" fill="rgb(62,62,66)"/>
<rect x="417" y="793" width="3" height="3" fill="rgb(157,157,161)"/>
<rect x="423" y="790" width="3" height="3" fill="rgb(107,107,111)"/>
<rect x="423" y="793" width="3" height="3" fill="rgb(190,190,194)"/>
<rect x="423" y="796" width="3" height="3" fill="rgb(147,147,151)"/>
<rect x="432" y="793" width="3" height="3" fill="rgb(35,35,39)"/>
<rect x="435" y="790" width="3" height="3" fill="rgb(157,157,161)"/>
<rect x="435" y="793" width="3" height="3" fill="rgb(161,161,165)"/>
<rect x="435" y="796" width="3" height="3" fill="rgb(88,88,92)"/>
<rect x="438" y="793" width="3" height="3" fill="rgb(83,83,87)"/>
<rect x="441" y="787" width="3" height="3" fill="rgb(82,82,86)"/>
<rect x="444" y="790" width="3" height="3" fill="rgb(60,60,64)"/>
<rect x="444" y="793" width="3" height="3" fill="rgb(58,58,62)"/>
<rect x="453" y="793" width="3" height="3" fill="rgb(166,166,170)"/>
<rect x="453" y="796" width="3" height="3" fill="rgb(169,169,173)"/>
<rect x="456" y="793" width="3" height="3" fill="rgb(54,54,58)"/>
<rect x="459" y="790" width="3" height="3" fill="rgb(101,101,105)"/>
<rect x="459" y="793" width="3" height="3" fill="rgb(192,192,196)"/>
<rect x="462" y="790" width="3" height="3" fill="rgb(36,36,40)"/>
<rect x="462" y="793" width="3" height="3" fill="rgb(46,46,50)"/>
<rect x="465" y="787" width="3" height="3" fill="rgb(152,152,156)"/>
<rect x="465" y="790" width="3" height="3" fill="rgb(154,154,158)"/>
<rect x="465" y="793" width="3" height="3" fill="rgb(150,150,154)"/>
<rect x="468" y="787" width="3" height="3" fill="rgb(40,40,44)"/>
<rect x="468" y="790" width="3" height="3" fill="rgb(117,117,121)"/>
<rect x="468" y="793" width="3" height="3" fill="rgb(41,41,45)"/>
<rect x="471" y="790" width="3" height="3" fill="rgb(104,104,108)"/>
<rect x="471" y="793" width="3" height="3" fill="rgb(191,191,195)"/>
<rect x="474" y="787" width="3" height="3" fill="rgb(194,194,198)"/>
<rect x="474" y="793" width="3" height="3" fill="rgb(114,114,118)"/>
<rect x="477" y="790" width="3" height="3" fill="rgb(106,106,110)"/>
<rect x="477" y="793" width="3" height="3" fill="rgb(61,61,65)"/>
<rect x="477" y="796" width="3" height="3" fill="rgb(99,99,103)"/>
<rect x="483" y="787" width="3" height="3" fill="rgb(63,63,67)"/>
<rect x="483" y="790" width="3" height="3" fill="rgb(99,99,103)"/>
<rect x="486" y="790" width="3" height="3" fill="rgb(109,109,113)"/>
<rect x="486" y="793" width="3" height="3" fill="rgb(77,77,81)"/>
<rect x="489" y="790" width="3" height="3" fill="rgb(34,34,38)"/>
<rect x="489" y="793" width="3" height="3" fill="rgb(45,45,49)"/>
<rect x="492" y="787" width="3" height="3" fill="rgb(99,99,103)"/>
<rect x="492" y="796" width="3" height="3" fill="rgb(174,174,178)"/>
<rect x="495" y="790" width="3" height="3" fill="rgb(154,154,158)"/>
<rect x="495" y="793" width="3" height="3" fill="rgb(81,81,85)"/>
<rect x="501" y="787" width="3" height="3" fill="rgb(44,44,48)"/>
<rect x="501" y="793" width="3" height="3" fill="rgb(33,33,37)"/>
<rect x="504" y="796" width="3" height="3" fill="rgb(121,121,125)"/>
<rect x="507" y="790" width="3" height="3" fill="rgb(161,161,165)"/>
<rect x="507" y="793" width="3" height="3" fill="rgb(72,72,76)"/>
<rect x="507" y="796" width="3" height="3" fill="rgb(100,100,104)"/>
<rect x="510" y="790" width="3" height="3" fill="rgb(138,138,142)"/>
<rect x="510" y="793" width="3" height="3" fill="rgb(107,107,111)"/>
<rect x="510" y="796" width="3" height="3" fill="rgb(27,27,31)"/>
<rect x="513" y="793" width="3" height="3" fill="rgb(149,149,153)"/>
<rect x="513" y="796" width="3" height="3" fill="rgb(62,62,66)"/>
<rect x="516" y="787" width="3" height="3" fill="rgb(172,172,176)"/>
<rect x="516" y="790" width="3" height="3" fill="rgb(40,40,44)"/>
<rect x="516" y="796" width="3" height="3" fill="rgb(169,169,173)"/>
<rect x="519" y="790" width="3" height="3" fill="rgb(75,75,79)"/>
<rect x="519" y="793" width="3" height="3" fill="rgb(185,185,189)"/>
<rect x="327" y="808" width="3" height="3" fill="rgb(195,195,199)"/>
<rect x="327" y="811" width="3" height="3" fill="rgb(155,155,159)"/>
<rect x="327" y="814" width="3" height="3" fill="rgb(162,162,166)"/>
<rect x="327" y="817" width="3" height="3" fill="rgb(178,178,182)"/>
<rect x="330" y="808" width="3" height="3" fill="rgb(37,37,41)"/>
<rect x="330" y="811" width="3" height="3" fill="rgb(50,50,54)"/>
<rect x="330" y="814" width="3" height="3" fill="rgb(191,191,195)"/>
<rect x="333" y="814" width="3" height="3" fill="rgb(168,168,172)"/>
<rect x="345" y="811" width="3" height="3" fill="rgb(126,126,130)"/>
<rect x="345" y="814" width="3" height="3" fill="rgb(154,154,158)"/>
<rect x="348" y="811" width="3" height="3" fill="rgb(195,195,199)"/>
<rect x="348" y="814" width="3" height="3" fill="rgb(40,40,44)"/>
<rect x="351" y="808" width="3" height="3" fill="rgb(125,125,129)"/>
<rect x="351" y="811" width="3" height="3" fill="rgb(93,93,97)"/>
<rect x="351" y="814" width="3" height="3" fill="rgb(109,109,113)"/>
<rect x="354" y="811" width="3" height="3" fill="rgb(163,163,167)"/>
<rect x="354" y="814" width="3" height="3" fill="rgb(165,165,169)"/>
<rect x="357" y="811" width="3" height="3" fill="rgb(38,38,42)"/>
<rect x="360" y="808" width="3" height="3" fill="rgb(96,96,100)"/>
<rect x="360" y="814" width="3" height="3" fill="rgb(189,189,193)"/>
<rect x="369" y="811" width="3" height="3" fill="rgb(190,190,194)"/>
<rect x="369" y="814" width="3" height="3" fill="rgb(154,154,158)"/>
<rect x="369" y="817" width="3" height="3" fill="rgb(139,139,143)"/>
<rect x="372" y="808" width="3" height="3" fill="rgb(38,38,42)"/>
<rect x="372" y="811" width="3" height="3" fill="rgb(192,192,196)"/>
<rect x="372" y="817" width="3" height="3" fill="rgb(168,168,172)"/>
<rect x="375" y="808" width="3" height="3" fill="rgb(184,184,188)"/>
<rect x="375" y="811" width="3" height="3" fill="rgb(92,92,96)"/>
<rect x="375" y="814" width="3" height="3" fill="rgb(72,72,76)"/>
<rect x="375" y="817" width="3" height="3" fill="rgb(66,66,70)"/>
<rect x="378" y="808" width="3" height="3" fill="rgb(103,103,107)"/>
<rect x="378" y="811" width="3" height="3" fill="rgb(149,149,153)"/>
<rect x="378" y="814" width="3" height="3" fill="rgb(184,184,188)"/>
<rect x="381" y="811" width="3" height="3" fill="rgb(53,53,57)"/>
<rect x="384" y="811" width="3" height="3" fill="rgb(118,118,122)"/>
<rect x="384" y="814" width="3" height="3" fill="rgb(98,98,102)"/>
<rect x="384" y="817" width="3" height="3" fill="rgb(64,64,68)"/>
<rect x="396" y="814" width="3" height="3" fill="rgb(113,113,117)"/>
<rect x="402" y="811" width="3" height="3" fill="rgb(86,86,90)"/>
<rect x="402" y="814" width="3" height="3" fill="rgb(192,192,196)"/>
<rect x="402" y="817" width="3" height="3" fill="rgb(139,139,143)"/>
<rect x="405" y="808" width="3" height="3" fill="rgb(63,63,67)"/>
<rect x="405" y="811" width="3" height="3" fill="rgb(96,96,100)"/>
<rect x="405" y="814" width="3" height="3" fill="rgb(88,88,92)"/>
<rect x="408" y="808" width="3" height="3" fill="rgb(69,69,73)"/>
<rect x="408" y="811" width="3" height="3" fill="rgb(116,116,120)"/>
<rect x="408" y="814" width="3" height="3" fill="rgb(91,91,95)"/>
<rect x="408" y="817" width="3" height="3" fill="rgb(79,79,83)"/>
<rect x="411" y="808" width="3" height="3" fill="rgb(185,185,189)"/>
<rect x="411" y="811" width="3" height="3" fill="rgb(80,80,84)"/>
<rect x="411" y="814" width="3" height="3" fill="rgb(78,78,82)"/>
<rect x="414" y="811" width="3" height="3" fill="rgb(120,120,124)"/>
<rect x="414" y="814" width="3" height="3" fill="rgb(74,74,78)"/>
<rect x="417" y="811" width="3" height="3" fill="rgb(174,174,178)"/>
<rect x="417" y="814" width="3" height="3" fill="rgb(77,77,81)"/>
<rect x="417" y="817" width="3" height="3" fill="rgb(106,106,110)"/>
<rect x="423" y="808" width="3" height="3" fill="rgb(154,154,158)"/>
<rect x="423" y="811" width="3" height="3" fill="rgb(86,86,90)"/>
<rect x="423" y="814" width="3" height="3" fill="rgb(151,151,155)"/>
<rect x="426" y="811" width="3" height="3" fill="rgb(178,178,182)"/>
<rect x="426" y="817" width="3" height="3" fill="rgb(40,40,44)"/>
<rect x="429" y="811" width="3" height="3" fill="rgb(123,123,127)"/>
<rect x="432" y="811" width="3" height="3" fill="rgb(164,164,168)"/>
<rect x="432" y="817" width="3" height="3" fill="rgb(104,104,108)"/>
<rect x="435" y="808" width="3" height="3" fill="rgb(113,113,117)"/>
<rect x="435" y="814" width="3" height="3" fill="rgb(65,65,69)"/>
<rect x="438" y="811" width="3" height="3" fill="rgb(160,160,164)"/>
<rect x="441" y="808" width="3" height="3" fill="rgb(197,197,201)"/>
<rect x="441" y="811" width="3" height="3" fill="rgb(125,125,129)"/>
<rect x="441" y="814" width="3" height="3" fill="rgb(175,175,179)"/>
<rect x="441" y="817" width="3" height="3" fill="rgb(146,146,150)"/>
<rect x="444" y="811" width="3" height="3" fill="rgb(76,76,80)"/>
<rect x="444" y="817" width="3" height="3" fill="rgb(48,48,52)"/>
<rect x="447" y="814" width="3" height="3" fill="rgb(137,137,141)"/>
<rect x="459" y="811" width="3" height="3" fill="rgb(153,153,157)"/>
<rect x="459" y="814" width="3" height="3" fill="rgb(181,181,185)"/>
<rect x="462" y="808" width="3" height="3" fill="rgb(46,46,50)"/>
<rect x="462" y="811" width="3" height="3" fill="rgb(155,155,159)"/>
<rect x="462" y="814" width="3" height="3" fill="rgb(167,167,171)"/>
<rect x="340" y="869" width="3" height="3" fill="rgb(125,125,129)"/>
<rect x="343" y="866" width="3" height="3" fill="rgb(144,144,148)"/>
<rect x="343" y="869" width="3" height="3" fill="rgb(142,142,146)"/>
<rect x="343" y="872" width="3" height="3" fill="rgb(189,189,193)"/>
<rect x="343" y="875" width="3" height="3" fill="rgb(124,124,128)"/>
<rect x="343" y="878" width="3" height="3" fill="rgb(170,170,174)"/>
<rect x="352" y="866" width="3" height="3" fill="rgb(143,143,147)"/>
<rect x="352" y="872" width="3" height="3" fill="rgb(152,152,156)"/>
<rect x="352" y="875" width="3" height="3" fill="rgb(162,162,166)"/>
<rect x="355" y="866" width="3" height="3" fill="rgb(202,202,206)"/>
<rect x="355" y="869" width="3" height="3" fill="rgb(126,126,130)"/>
<rect x="355" y="872" width="3" height="3" fill="rgb(196,196,200)"/>
<rect x="358" y="869" width="3" height="3" fill="rgb(199,199,203)"/>
<rect x="358" y="872" width="3" height="3" fill="rgb(184,184,188)"/>
<rect x="358" y="875" width="3" height="3" fill="rgb(194,194,198)"/>
<rect x="358" y="878" width="3" height="3" fill="rgb(160,160,164)"/>
<rect x="361" y="869" width="3" height="3" fill="rgb(176,176,180)"/>
<rect x="361" y="872" width="3" height="3" fill="rgb(165,165,169)"/>
<rect x="361" y="878" width="3" height="3" fill="rgb(212,212,216)"/>
<rect x="364" y="866" width="3" height="3" fill="rgb(120,120,124)"/>
<rect x="364" y="869" width="3" height="3" fill="rgb(167,167,171)"/>
<rect x="364" y="872" width="3" height="3" fill="rgb(130,130,134)"/>
<rect x="364" y="875" width="3" height="3" fill="rgb(191,191,195)"/>
<rect x="364" y="878" width="3" height="3" fill="rgb(178,178,182)"/>
<rect x="367" y="878" width="3" height="3" fill="rgb(215,215,219)"/>
<rect x="379" y="869" width="3" height="3" fill="rgb(211,211,215)"/>
<rect x="382" y="869" width="3" height="3" fill="rgb(139,139,143)"/>
<rect x="382" y="872" width="3" height="3" fill="rgb(203,203,207)"/>
<rect x="382" y="878" width="3" height="3" fill="rgb(134,134,138)"/>
<rect x="385" y="875" width="3" height="3" fill="rgb(139,139,143)"/>
<rect x="385" y="878" width="3" height="3" fill="rgb(206,206,210)"/>
<rect x="388" y="869" width="3" height="3" fill="rgb(146,146,150)"/>
<rect x="391" y="872" width="3" height="3" fill="rgb(188,188,192)"/>
<rect x="391" y="878" width="3" height="3" fill="rgb(192,192,196)"/>
<rect x="394" y="869" width="3" height="3" fill="rgb(164,164,168)"/>
<rect x="394" y="875" width="3" height="3" fill="rgb(186,186,190)"/>
<rect x="397" y="866" width="3" height="3" fill="rgb(165,165,169)"/>
<rect x="397" y="869" width="3" height="3" fill="rgb(216,216,220)"/>
<rect x="397" y="872" width="3" height="3" fill="rgb(152,152,156)"/>
<rect x="397" y="875" width="3" height="3" fill="rgb(199,199,203)"/>
<rect x="400" y="869" width="3" height="3" fill="rgb(195,195,199)"/>
<rect x="400" y="872" width="3" height="3" fill="rgb(181,181,185)"/>
<rect x="403" y="869" width="3" height="3" fill="rgb(178,178,182)"/>
<rect x="403" y="872" width="3" height="3" fill="rgb(189,189,193)"/>
<rect x="403" y="878" width="3" height="3" fill="rgb(168,168,172)"/>
<rect x="409" y="869" width="3" height="3" fill="rgb(171,171,175)"/>
<rect x="409" y="872" width="3" height="3" fill="rgb(128,128,132)"/>
<rect x="409" y="875" width="3" height="3" fill="rgb(155,155,159)"/>
<rect x="412" y="869" width="3" height="3" fill="rgb(126,126,130)"/>
<rect x="412" y="872" width="3" height="3" fill="rgb(158,158,162)"/>
<rect x="412" y="878" width="3" height="3" fill="rgb(216,216,220)"/>
<rect x="415" y="869" width="3" height="3" fill="rgb(146,146,150)"/>
<rect x="415" y="872" width="3" height="3" fill="rgb(173,173,177)"/>
<rect x="415" y="878" width="3" height="3" fill="rgb(207,207,211)"/>
<rect x="418" y="866" width="3" height="3" fill="rgb(202,202,206)"/>
<rect x="418" y="869" width="3" height="3" fill="rgb(152,152,156)"/>
<rect x="418" y="872" width="3" height="3" fill="rgb(171,171,175)"/>
<rect x="418" y="875" width="3" height="3" fill="rgb(145,145,149)"/>
<rect x="421" y="869" width="3" height="3" fill="rgb(207,207,211)"/>
<rect x="421" y="872" width="3" height="3" fill="rgb(210,210,214)"/>
<rect x="424" y="872" width="3" height="3" fill="rgb(140,140,144)"/>
<rect x="424" y="875" width="3" height="3" fill="rgb(136,136,140)"/>
<rect x="424" y="878" width="3" height="3" fill="rgb(147,147,151)"/>
<rect x="430" y="869" width="3" height="3" fill="rgb(186,186,190)"/>
<rect x="430" y="872" width="3" height="3" fill="rgb(170,170,174)"/>
<rect x="430" y="878" width="3" height="3" fill="rgb(155,155,159)"/>
<rect x="433" y="869" width="3" height="3" fill="rgb(171,171,175)"/>
<rect x="433" y="875" width="3" height="3" fill="rgb(199,199,203)"/>
<rect x="433" y="878" width="3" height="3" fill="rgb(157,157,161)"/>
<rect x="436" y="869" width="3" height="3" fill="rgb(121,121,125)"/>
<rect x="436" y="872" width="3" height="3" fill="rgb(142,142,146)"/>
<rect x="439" y="866" width="3" height="3" fill="rgb(145,145,149)"/>
<rect x="439" y="869" width="3" height="3" fill="rgb(136,136,140)"/>
<rect x="439" y="875" width="3" height="3" fill="rgb(134,134,138)"/>
<rect x="439" y="878" width="3" height="3" fill="rgb(146,146,150)"/>
<rect x="445" y="866" width="3" height="3" fill="rgb(168,168,172)"/>
<rect x="445" y="869" width="3" height="3" fill="rgb(124,124,128)"/>
<rect x="445" y="872" width="3" height="3" fill="rgb(148,148,152)"/>
<rect x="445" y="875" width="3" height="3" fill="rgb(194,194,198)"/>
<rect x="448" y="872" width="3" height="3" fill="rgb(166,166,170)"/>
<rect x="448" y="878" width="3" height="3" fill="rgb(177,177,181)"/>
<rect x="460" y="869" width="3" height="3" fill="rgb(202,202,206)"/>
<rect x="460" y="872" width="3" height="3" fill="rgb(208,208,212)"/>
<rect x="460" y="875" width="3" height="3" fill="rgb(155,155,159)"/>
<rect x="460" y="878" width="3" height="3" fill="rgb(176,176,180)"/>
<rect x="463" y="872" width="3" height="3" fill="rgb(205,205,209)"/>
<rect x="469" y="869" width="3" height="3" fill="rgb(190,190,194)"/>
<rect x="469" y="872" width="3" height="3" fill="rgb(193,193,197)"/>
<rect x="469" y="875" width="3" height="3" fill="rgb(174,174,178)"/>
<rect x="469" y="878" width="3" height="3" fill="rgb(194,194,198)"/>
<rect x="472" y="866" width="3" height="3" fill="rgb(126,126,130)"/>
<rect x="472" y="869" width="3" height="3" fill="rgb(212,212,216)"/>
<rect x="472" y="872" width="3" height="3" fill="rgb(193,193,197)"/>
<rect x="475" y="866" width="3" height="3" fill="rgb(171,171,175)"/>
<rect x="475" y="869" width="3" height="3" fill="rgb(218,218,222)"/>
<rect x="475" y="875" width="3" height="3" fill="rgb(173,173,177)"/>
<rect x="484" y="866" width="3" height="3" fill="rgb(199,199,203)"/>
<rect x="484" y="872" width="3" height="3" fill="rgb(124,124,128)"/>
<rect x="487" y="869" width="3" height="3" fill="rgb(139,139,143)"/>
<rect x="487" y="875" width="3" height="3" fill="rgb(158,158,162)"/>
<rect x="490" y="866" width="3" height="3" fill="rgb(181,181,185)"/>
<rect x="490" y="869" width="3" height="3" fill="rgb(198,198,202)"/>
<rect x="490" y="872" width="3" height="3" fill="rgb(157,157,161)"/>
<rect x="490" y="878" width="3" height="3" fill="rgb(217,217,221)"/>
<rect x="493" y="866" width="3" height="3" fill="rgb(149,149,153)"/>
<rect x="493" y="869" width="3" height="3" fill="rgb(187,187,191)"/>
<rect x="493" y="872" width="3" height="3" fill="rgb(137,137,141)"/>
<rect x="493" y="878" width="3" height="3" fill="rgb(208,208,212)"/>
<rect x="496" y="869" width="3" height="3" fill="rgb(153,153,157)"/>
<rect x="496" y="872" width="3" height="3" fill="rgb(202,202,206)"/>
<rect x="505" y="869" width="3" height="3" fill="rgb(142,142,146)"/>
<rect x="505" y="878" width="3" height="3" fill="rgb(140,140,144)"/>
<rect x="508" y="869" width="3" height="3" fill="rgb(179,179,183)"/>
<rect x="508" y="872" width="3" height="3" fill="rgb(122,122,126)"/>
<rect x="508" y="878" width="3" height="3" fill="rgb(207,207,211)"/>
<rect x="511" y="866" width="3" height="3" fill="rgb(160,160,164)"/>
<rect x="511" y="869" width="3" height="3" fill="rgb(140,140,144)"/>
<rect x="511" y="872" width="3" height="3" fill="rgb(213,213,217)"/>
<rect x="511" y="875" width="3" height="3" fill="rgb(136,136,140)"/>
<rect x="514" y="872" width="3" height="3" fill="rgb(201,201,205)"/>
<rect x="514" y="875" width="3" height="3" fill="rgb(202,202,206)"/>
<rect x="514" y="878" width="3" height="3" fill="rgb(212,212,216)"/>
<rect x="517" y="878" width="3" height="3" fill="rgb(133,133,137)"/>
<rect x="520" y="866" width="3" height="3" fill="rgb(125,125,129)"/>
<rect x="520" y="869" width="3" height="3" fill="rgb(157,157,161)"/>
<rect x="520" y="872" width="3" height="3" fill="rgb(210,210,214)"/>
<rect x="526" y="869" width="3" height="3" fill="rgb(198,198,202)"/>
<rect x="526" y="872" width="3" height="3" fill="rgb(161,161,165)"/>
<rect x="526" y="875" width="3" height="3" fill="rgb(123,123,127)"/>
<rect x="526" y="878" width="3" height="3" fill="rgb(182,182,186)"/>
<rect x="284" y="777" width="33" height="50" fill="#e9e9e9"/>
<rect x="284" y="777" width="3" height="3" fill="rgb(225,225,225)"/>
<rect x="287" y="777" width="3" height="3" fill="rgb(236,236,236)"/>
<rect x="290" y="777" width="3" height="3" fill="rgb(235,235,235)"/>
<rect x="293" y="777" width="3" height="3" fill="#6e6e75"/>
<rect x="296" y="777" width="3" height="3" fill="#a8a8ad"/>
<rect x="299" y="777" width="3" height="3" fill="#b07a68"/>
<rect x="302" y="777" width="3" height="3" fill="#5b5b62"/>
<rect x="305" y="777" width="3" height="3" fill="#c9c9cc"/>
<rect x="308" y="777" width="3" height="3" fill="rgb(236,236,236)"/>
<rect x="311" y="777" width="3" height="3" fill="rgb(220,220,220)"/>
<rect x="314" y="777" width="3" height="3" fill="rgb(237,237,237)"/>
<rect x="284" y="780" width="3" height="3" fill="rgb(218,218,218)"/>
<rect x="287" y="780" width="3" height="3" fill="rgb(233,233,233)"/>
<rect x="290" y="780" width="3" height="3" fill="rgb(226,226,226)"/>
<rect x="293" y="780" width="3" height="3" fill="#b07a68"/>
<rect x="296" y="780" width="3" height="3" fill="#6e6e75"/>
<rect x="299" y="780" width="3" height="3" fill="#6e6e75"/>
<rect x="302" y="780" width="3" height="3" fill="#c9c9cc"/>
<rect x="305" y="780" width="3" height="3" fill="#5b5b62"/>
<rect x="308" y="780" width="3" height="3" fill="rgb(235,235,235)"/>
<rect x="311" y="780" width="3" height="3" fill="rgb(235,235,235)"/>
<rect x="314" y="780" width="3" height="3" fill="rgb(233,233,233)"/>
<rect x="284" y="783" width="3" height="3" fill="rgb(230,230,230)"/>
<rect x="287" y="783" width="3" height="3" fill="rgb(238,238,238)"/>
<rect x="290" y="783" width="3" height="3" fill="rgb(222,222,222)"/>
<rect x="293" y="783" width="3" height="3" fill="#6e6e75"/>
<rect x="296" y="783" width="3" height="3" fill="#c9c9cc"/>
<rect x="299" y="783" width="3" height="3" fill="#6e6e75"/>
<rect x="302" y="783" width="3" height="3" fill="#7d6f70"/>
<rect x="305" y="783" width="3" height="3" fill="#b07a68"/>
<rect x="308" y="783" width="3" height="3" fill="rgb(230,230,230)"/>
<rect x="311" y="783" width="3" height="3" fill="rgb(218,218,218)"/>
<rect x="314" y="783" width="3" height="3" fill="rgb(239,239,239)"/>
<rect x="284" y="786" width="3" height="3" fill="rgb(220,220,220)"/>
<rect x="287" y="786" width="3" height="3" fill="rgb(223,223,223)"/>
<rect x="290" y="786" width="3" height="3" fill="rgb(236,236,236)"/>
<rect x="293" y="786" width="3" height="3" fill="#8d8d93"/>
<rect x="296" y="786" width="3" height="3" fill="#a8a8ad"/>
<rect x="299" y="786" width="3" height="3" fill="#7d6f70"/>
<rect x="302" y="786" width="3" height="3" fill="#8d8d93"/>
<rect x="305" y="786" width="3" height="3" fill="#7d6f70"/>
<rect x="308" y="786" width="3" height="3" fill="rgb(226,226,226)"/>
<rect x="311" y="786" width="3" height="3" fill="rgb(233,233,233)"/>
<rect x="314" y="786" width="3" height="3" fill="rgb(237,237,237)"/>
<rect x="284" y="789" width="3" height="3" fill="rgb(230,230,230)"/>
<rect x="287" y="789" width="3" height="3" fill="rgb(240,240,240)"/>
<rect x="290" y="789" width="3" height="3" fill="rgb(231,231,231)"/>
<rect x="293" y="789" width="3" height="3" fill="#5b5b62"/>
<rect x="296" y="789" width="3" height="3" fill="#c9c9cc"/>
<rect x="299" y="789" width="3" height="3" fill="#7d6f70"/>
<rect x="302" y="789" width="3" height="3" fill="#b07a68"/>
<rect x="305" y="789" width="3" height="3" fill="#5b5b62"/>
<rect x="308" y="789" width="3" height="3" fill="rgb(222,222,222)"/>
<rect x="311" y="789" width="3" height="3" fill="rgb(229,229,229)"/>
<rect x="314" y="789" width="3" height="3" fill="rgb(221,221,221)"/>
<rect x="284" y="792" width="3" height="3" fill="rgb(219,219,219)"/>
<rect x="287" y="792" width="3" height="3" fill="rgb(222,222,222)"/>
<rect x="290" y="792" width="3" height="3" fill="rgb(233,233,233)"/>
<rect x="293" y="792" width="3" height="3" fill="#6e6e75"/>
<rect x="296" y="792" width="3" height="3" fill="#a8a8ad"/>
<rect x="299" y="792" width="3" height="3" fill="#c9c9cc"/>
<rect x="302" y="792" width="3" height="3" fill="#5b5b62"/>
<rect x="305" y="792" width="3" height="3" fill="#7d6f70"/>
<rect x="308" y="792" width="3" height="3" fill="rgb(238,238,238)"/>
<rect x="311" y="792" width="3" height="3" fill="rgb(227,227,227)"/>
<rect x="314" y="792" width="3" height="3" fill="rgb(231,231,231)"/>
<rect x="284" y="795" width="3" height="3" fill="rgb(234,234,234)"/>
<rect x="287" y="795" width="3" height="3" fill="rgb(230,230,230)"/>
<rect x="290" y="795" width="3" height="3" fill="rgb(236,236,236)"/>
<rect x="293" y="795" width="3" height="3" fill="#a8a8ad"/>
<rect x="296" y="795" width="3" height="3" fill="#b07a68"/>
<rect x="299" y="795" width="3" height="3" fill="#b07a68"/>
<rect x="302" y="795" width="3" height="3" fill="#5b5b62"/>
<rect x="305" y="795" width="3" height="3" fill="#b07a68"/>
<rect x="308" y="795" width="3" height="3" fill="rgb(225,225,225)"/>
<rect x="311" y="795" width="3" height="3" fill="rgb(228,228,228)"/>
<rect x="314" y="795" width="3" height="3" fill="rgb(239,239,239)"/>
<rect x="284" y="798" width="3" height="3" fill="rgb(218,218,218)"/>
<rect x="287" y="798" width="3" height="3" fill="rgb(226,226,226)"/>
<rect x="290" y="798" width="3" height="3" fill="rgb(237,237,237)"/>
<rect x="293" y="798" width="3" height="3" fill="#c9c9cc"/>
<rect x="296" y="798" width="3" height="3" fill="#c9c9cc"/>
<rect x="299" y="798" width="3" height="3" fill="#6e6e75"/>
<rect x="302" y="798" width="3" height="3" fill="#c9c9cc"/>
<rect x="305" y="798" width="3" height="3" fill="#7d6f70"/>
<rect x="308" y="798" width="3" height="3" fill="rgb(228,228,228)"/>
<rect x="311" y="798" width="3" height="3" fill="rgb(235,235,235)"/>
<rect x="314" y="798" width="3" height="3" fill="rgb(236,236,236)"/>
<rect x="284" y="801" width="3" height="3" fill="rgb(236,236,236)"/>
<rect x="287" y="801" width="3" height="3" fill="rgb(221,221,221)"/>
<rect x="290" y="801" width="3" height="3" fill="rgb(240,240,240)"/>
<rect x="293" y="801" width="3" height="3" fill="#c9c9cc"/>
<rect x="296" y="801" width="3" height="3" fill="#6e6e75"/>
<rect x="299" y="801" width="3" height="3" fill="#c9c9cc"/>
<rect x="302" y="801" width="3" height="3" fill="#7d6f70"/>
<rect x="305" y="801" width="3" height="3" fill="#b07a68"/>
<rect x="308" y="801" width="3" height="3" fill="rgb(226,226,226)"/>
<rect x="311" y="801" width="3" height="3" fill="rgb(227,227,227)"/>
<rect x="314" y="801" width="3" height="3" fill="rgb(221,221,221)"/>
<rect x="284" y="804" width="3" height="3" fill="rgb(220,220,220)"/>
<rect x="287" y="804" width="3" height="3" fill="rgb(233,233,233)"/>
<rect x="290" y="804" width="3" height="3" fill="rgb(238,238,238)"/>
<rect x="293" y="804" width="3" height="3" fill="#5b5b62"/>
<rect x="296" y="804" width="3" height="3" fill="#8d8d93"/>
<rect x="299" y="804" width="3" height="3" fill="#a8a8ad"/>
<rect x="302" y="804" width="3" height="3" fill="#7d6f70"/>
<rect x="305" y="804" width="3" height="3" fill="#8d8d93"/>
<rect x="308" y="804" width="3" height="3" fill="rgb(231,231,231)"/>
<rect x="311" y="804" width="3" height="3" fill="rgb(222,222,222)"/>
<rect x="314" y="804" width="3" height="3" fill="rgb(218,218,218)"/>
<rect x="284" y="807" width="3" height="3" fill="rgb(227,227,227)"/>
<rect x="287" y="807" width="3" height="3" fill="rgb(231,231,231)"/>
<rect x="290" y="807" width="3" height="3" fill="rgb(231,231,231)"/>
<rect x="293" y="807" width="3" height="3" fill="#7d6f70"/>
<rect x="296" y="807" width="3" height="3" fill="#8d8d93"/>
<rect x="299" y="807" width="3" height="3" fill="#8d8d93"/>
<rect x="302" y="807" width="3" height="3" fill="#b07a68"/>
<rect x="305" y="807" width="3" height="3" fill="#b07a68"/>
<rect x="308" y="807" width="3" height="3" fill="rgb(219,219,219)"/>
<rect x="311" y="807" width="3" height="3" fill="rgb(230,230,230)"/>
<rect x="314" y="807" width="3" height="3" fill="rgb(240,240,240)"/>
<rect x="284" y="810" width="3" height="3" fill="rgb(236,236,236)"/>
<rect x="287" y="810" width="3" height="3" fill="rgb(228,228,228)"/>
<rect x="290" y="810" width="3" height="3" fill="rgb(235,235,235)"/>
<rect x="293" y="810" width="3" height="3" fill="#a8a8ad"/>
<rect x="296" y="810" width="3" height="3" fill="#b07a68"/>
<rect x="299" y="810" width="3" height="3" fill="#6e6e75"/>
<rect x="302" y="810" width="3" height="3" fill="#8d8d93"/>
<rect x="305" y="810" width="3" height="3" fill="#a8a8ad"/>
<rect x="308" y="810" width="3" height="3" fill="rgb(218,218,218)"/>
<rect x="311" y="810" width="3" height="3" fill="rgb(220,220,220)"/>
<rect x="314" y="810" width="3" height="3" fill="rgb(221,221,221)"/>
<rect x="284" y="813" width="3" height="3" fill="rgb(237,237,237)"/>
<rect x="287" y="813" width="3" height="3" fill="rgb(235,235,235)"/>
<rect x="290" y="813" width="3" height="3" fill="rgb(219,219,219)"/>
<rect x="293" y="813" width="3" height="3" fill="#6e6e75"/>
<rect x="296" y="813" width="3" height="3" fill="#5b5b62"/>
<rect x="299" y="813" width="3" height="3" fill="#a8a8ad"/>
<rect x="302" y="813" width="3" height="3" fill="#b07a68"/>
<rect x="305" y="813" width="3" height="3" fill="#a8a8ad"/>
<rect x="308" y="813" width="3" height="3" fill="rgb(222,222,222)"/>
<rect x="311" y="813" width="3" height="3" fill="rgb(240,240,240)"/>
<rect x="314" y="813" width="3" height="3" fill="rgb(219,219,219)"/>
<rect x="284" y="816" width="3" height="3" fill="rgb(228,228,228)"/>
<rect x="287" y="816" width="3" height="3" fill="rgb(228,228,228)"/>
<rect x="290" y="816" width="3" height="3" fill="rgb(229,229,229)"/>
<rect x="293" y="816" width="3" height="3" fill="#6e6e75"/>
<rect x="296" y="816" width="3" height="3" fill="#7d6f70"/>
<rect x="299" y="816" width="3" height="3" fill="#5b5b62"/>
<rect x="302" y="816" width="3" height="3" fill="#5b5b62"/>
<rect x="305" y="816" width="3" height="3" fill="#5b5b62"/>
<rect x="308" y="816" width="3" height="3" fill="rgb(234,234,234)"/>
<rect x="311" y="816" width="3" height="3" fill="rgb(230,230,230)"/>
<rect x="314" y="816" width="3" height="3" fill="rgb(238,238,238)"/>
<rect x="284" y="819" width="3" height="3" fill="rgb(237,237,237)"/>
<rect x="287" y="819" width="3" height="3" fill="rgb(239,239,239)"/>
<rect x="290" y="819" width="3" height="3" fill="rgb(235,235,235)"/>
<rect x="293" y="819" width="3" height="3" fill="#8d8d93"/>
<rect x="296" y="819" width="3" height="3" fill="#b07a68"/>
<rect x="299" y="819" width="3" height="3" fill="#7d6f70"/>
<rect x="302" y="819" width="3" height="3" fill="#b07a68"/>
<rect x="305" y="819" width="3" height="3" fill="#a8a8ad"/>
<rect x="308" y="819" width="3" height="3" fill="rgb(231,231,231)"/>
<rect x="311" y="819" width="3" height="3" fill="rgb(238,238,238)"/>
<rect x="314" y="819" width="3" height="3" fill="rgb(240,240,240)"/>
<rect x="284" y="822" width="3" height="3" fill="rgb(225,225,225)"/>
<rect x="287" y="822" width="3" height="3" fill="rgb(227,227,227)"/>
<rect x="290" y="822" width="3" height="3" fill="rgb(231,231,231)"/>
<rect x="293" y="822" width="3" height="3" fill="#a8a8ad"/>
<rect x="296" y="822" width="3" height="3" fill="#b07a68"/>
<rect x="299" y="822" width="3" height="3" fill="#a8a8ad"/>
<rect x="302" y="822" width="3" height="3" fill="#b07a68"/>
<rect x="305" y="822" width="3" height="3" fill="#a8a8ad"/>
<rect x="308" y="822" width="3" height="3" fill="rgb(218,218,218)"/>
<rect x="311" y="822" width="3" height="3" fill="rgb(231,231,231)"/>
<rect x="314" y="822" width="3" height="3" fill="rgb(236,236,236)"/>
<rect x="284" y="825" width="3" height="3" fill="rgb(228,228,228)"/>
<rect x="287" y="825" width="3" height="3" fill="rgb(218,218,218)"/>
<rect x="290" y="825" width="3" height="3" fill="rgb(230,230,230)"/>
<rect x="293" y="825" width="3" height="3" fill="#b07a68"/>
<rect x="296" y="825" width="3" height="3" fill="#b07a68"/>
<rect x="299" y="825" width="3" height="3" fill="#c9c9cc"/>
<rect x="302" y="825" width="3" height="3" fill="#6e6e75"/>
<rect x="305" y="825" width="3" height="3" fill="#8d8d93"/>
<rect x="308" y="825" width="3" height="3" fill="rgb(238,238,238)"/>
<rect x="311" y="825" width="3" height="3" fill="rgb(238,238,238)"/>
<rect x="314" y="825" width="3" height="3" fill="rgb(228,228,228)"/>
<rect x="284" y="858" width="3" height="3" fill="rgb(198,198,203)"/>
<rect x="287" y="858" width="3" height="3" fill="rgb(225,225,230)"/>
<rect x="290" y="858" width="3" height="3" fill="#7c4e3f"/>
<rect x="293" y="858" width="3" height="3" fill="#7c4e3f"/>
<rect x="296" y="858" width="3" height="3" fill="#a06a55"/>
<rect x="299" y="858" width="3" height="3" fill="#8d5a48"/>
<rect x="302" y="858" width="3" height="3" fill="#7c4e3f"/>
<rect x="305" y="858" width="3" height="3" fill="#8d5a48"/>
<rect x="308" y="858" width="3" height="3" fill="#1e2a55"/>
<rect x="311" y="858" width="3" height="3" fill="#7c4e3f"/>
<rect x="314" y="858" width="3" height="3" fill="#3a4c82"/>
<rect x="317" y="858" width="3" height="3" fill="#8d5a48"/>
<rect x="320" y="858" width="3" height="3" fill="#1e2a55"/>
<rect x="323" y="858" width="3" height="3" fill="#2d3f73"/>
<rect x="326" y="858" width="3" height="3" fill="rgb(208,208,213)"/>
<rect x="329" y="858" width="3" height="3" fill="rgb(195,195,200)"/>
<rect x="332" y="858" width="3" height="3" fill="rgb(198,198,203)"/>
<rect x="284" y="861" width="3" height="3" fill="rgb(211,211,216)"/>
<rect x="287" y="861" width="3" height="3" fill="rgb(217,217,222)"/>
<rect x="290" y="861" width="3" height="3" fill="#8d5a48"/>
<rect x="293" y="861" width="3" height="3" fill="#2d3f73"/>
<rect x="296" y="861" width="3" height="3" fill="#1e2a55"/>
<rect x="299" y="861" width="3" height="3" fill="#2d3f73"/>
<rect x="302" y="861" width="3" height="3" fill="#2d3f73"/>
<rect x="305" y="861" width="3" height="3" fill="#a06a55"/>
<rect x="308" y="861" width="3" height="3" fill="#a06a55"/>
<rect x="311" y="861" width="3" height="3" fill="#2d3f73"/>
<rect x="314" y="861" width="3" height="3" fill="#7c4e3f"/>
<rect x="317" y="861" width="3" height="3" fill="#d8d8e0"/>
<rect x="320" y="861" width="3" height="3" fill="#7c4e3f"/>
<rect x="323" y="861" width="3" height="3" fill="#a06a55"/>
<rect x="326" y="861" width="3" height="3" fill="rgb(203,203,208)"/>
<rect x="329" y="861" width="3" height="3" fill="rgb(184,184,189)"/>
<rect x="332" y="861" width="3" height="3" fill="rgb(210,210,215)"/>
<rect x="284" y="864" width="3" height="3" fill="rgb(188,188,193)"/>
<rect x="287" y="864" width="3" height="3" fill="rgb(201,201,206)"/>
<rect x="290" y="864" width="3" height="3" fill="#2d3f73"/>
<rect x="293" y="864" width="3" height="3" fill="#1e2a55"/>
<rect x="296" y="864" width="3" height="3" fill="#7c4e3f"/>
<rect x="299" y="864" width="3" height="3" fill="#3a4c82"/>
<rect x="302" y="864" width="3" height="3" fill="#23305e"/>
<rect x="305" y="864" width="3" height="3" fill="#1e2a55"/>
<rect x="308" y="864" width="3" height="3" fill="#3a4c82"/>
<rect x="311" y="864" width="3" height="3" fill="#d8d8e0"/>
<rect x="314" y="864" width="3" height="3" fill="#a06a55"/>
<rect x="317" y="864" width="3" height="3" fill="#3a4c82"/>
<rect x="320" y="864" width="3" height="3" fill="#2d3f73"/>
<rect x="323" y="864" width="3" height="3" fill="#1e2a55"/>
<rect x="326" y="864" width="3" height="3" fill="rgb(206,206,211)"/>
<rect x="329" y="864" width="3" height="3" fill="rgb(219,219,224)"/>
<rect x="332" y="864" width="3" height="3" fill="rgb(176,176,181)"/>
<rect x="284" y="867" width="3" height="3" fill="rgb(195,195,200)"/>
<rect x="287" y="867" width="3" height="3" fill="rgb(176,176,181)"/>
<rect x="290" y="867" width="3" height="3" fill="#3a4c82"/>
<rect x="293" y="867" width="3" height="3" fill="#23305e"/>
<rect x="296" y="867" width="3" height="3" fill="#1e2a55"/>
<rect x="299" y="867" width="3" height="3" fill="#2d3f73"/>
<rect x="302" y="867" width="3" height="3" fill="#2d3f73"/>
<rect x="305" y="867" width="3" height="3" fill="#a06a55"/>
<rect x="308" y="867" width="3" height="3" fill="#a06a55"/>
<rect x="311" y="867" width="3" height="3" fill="#2d3f73"/>
<rect x="314" y="867" width="3" height="3" fill="#7c4e3f"/>
<rect x="317" y="867" width="3" height="3" fill="#23305e"/>
<rect x="320" y="867" width="3" height="3" fill="#23305e"/>
<rect x="323" y="867" width="3" height="3" fill="#23305e"/>
<rect x="326" y="867" width="3" height="3" fill="rgb(174,174,179)"/>
<rect x="329" y="867" width="3" height="3" fill="rgb(206,206,211)"/>
<rect x="332" y="867" width="3" height="3" fill="rgb(210,210,215)"/>
<rect x="284" y="870" width="3" height="3" fill="rgb(182,182,187)"/>
<rect x="287" y="870" width="3" height="3" fill="rgb(219,219,224)"/>
<rect x="290" y="870" width="3" height="3" fill="#3a4c82"/>
<rect x="293" y="870" width="3" height="3" fill="#d8d8e0"/>
<rect x="296" y="870" width="3" height="3" fill="#1e2a55"/>
<rect x="299" y="870" width="3" height="3" fill="#3a4c82"/>
<rect x="302" y="870" width="3" height="3" fill="#d8d8e0"/>
<rect x="305" y="870" width="3" height="3" fill="#2d3f73"/>
<rect x="308" y="870" width="3" height="3" fill="#23305e"/>
<rect x="311" y="870" width="3" height="3" fill="#1e2a55"/>
<rect x="314" y="870" width="3" height="3" fill="#8d5a48"/>
<rect x="317" y="870" width="3" height="3" fill="#a06a55"/>
<rect x="320" y="870" width="3" height="3" fill="#1e2a55"/>
<rect x="323" y="870" width="3" height="3" fill="#2d3f73"/>
<rect x="326" y="870" width="3" height="3" fill="rgb(173,173,178)"/>
<rect x="329" y="870" width="3" height="3" fill="rgb(199,199,204)"/>
<rect x="332" y="870" width="3" height="3" fill="rgb(221,221,226)"/>
<rect x="284" y="873" width="3" height="3" fill="rgb(201,201,206)"/>
<rect x="287" y="873" width="3" height="3" fill="rgb(181,181,186)"/>
<rect x="290" y="873" width="3" height="3" fill="#a06a55"/>
<rect x="293" y="873" width="3" height="3" fill="#7c4e3f"/>
<rect x="296" y="873" width="3" height="3" fill="#a06a55"/>
<rect x="299" y="873" width="3" height="3" fill="#8d5a48"/>
<rect x="302" y="873" width="3" height="3" fill="#23305e"/>
<rect x="305" y="873" width="3" height="3" fill="#23305e"/>
<rect x="308" y="873" width="3" height="3" fill="#1e2a55"/>
<rect x="311" y="873" width="3" height="3" fill="#23305e"/>
<rect x="314" y="873" width="3" height="3" fill="#23305e"/>
<rect x="317" y="873" width="3" height="3" fill="#a06a55"/>
<rect x="320" y="873" width="3" height="3" fill="#2d3f73"/>
<rect x="323" y="873" width="3" height="3" fill="#3a4c82"/>
<rect x="326" y="873" width="3" height="3" fill="rgb(225,225,230)"/>
<rect x="329" y="873" width="3" height="3" fill="rgb(221,221,226)"/>
<rect x="332" y="873" width="3" height="3" fill="rgb(207,207,212)"/>
<rect x="284" y="876" width="3" height="3" fill="rgb(189,189,194)"/>
<rect x="287" y="876" width="3" height="3" fill="rgb(171,171,176)"/>
<rect x="290" y="876" width="3" height="3" fill="#a06a55"/>
<rect x="293" y="876" width="3" height="3" fill="#8d5a48"/>
<rect x="296" y="876" width="3" height="3" fill="#23305e"/>
<rect x="299" y="876" width="3" height="3" fill="#1e2a55"/>
<rect x="302" y="876" width="3" height="3" fill="#2d3f73"/>
<rect x="305" y="876" width="3" height="3" fill="#8d5a48"/>
<rect x="308" y="876" width="3" height="3" fill="#a06a55"/>
<rect x="311" y="876" width="3" height="3" fill="#7c4e3f"/>
<rect x="314" y="876" width="3" height="3" fill="#3a4c82"/>
<rect x="317" y="876" width="3" height="3" fill="#2d3f73"/>
<rect x="320" y="876" width="3" height="3" fill="#d8d8e0"/>
<rect x="323" y="876" width="3" height="3" fill="#3a4c82"/>
<rect x="326" y="876" width="3" height="3" fill="rgb(194,194,199)"/>
<rect x="329" y="876" width="3" height="3" fill="rgb(174,174,179)"/>
<rect x="332" y="876" width="3" height="3" fill="rgb(174,174,179)"/>
<rect x="284" y="879" width="3" height="3" fill="rgb(175,175,180)"/>
<rect x="287" y="879" width="3" height="3" fill="rgb(183,183,188)"/>
<rect x="290" y="879" width="3" height="3" fill="#a06a55"/>
<rect x="293" y="879" width="3" height="3" fill="#2d3f73"/>
<rect x="296" y="879" width="3" height="3" fill="#d8d8e0"/>
<rect x="299" y="879" width="3" height="3" fill="#d8d8e0"/>
<rect x="302" y="879" width="3" height="3" fill="#7c4e3f"/>
<rect x="305" y="879" width="3" height="3" fill="#8d5a48"/>
<rect x="308" y="879" width="3" height="3" fill="#7c4e3f"/>
<rect x="311" y="879" width="3" height="3" fill="#8d5a48"/>
<rect x="314" y="879" width="3" height="3" fill="#23305e"/>
<rect x="317" y="879" width="3" height="3" fill="#8d5a48"/>
<rect x="320" y="879" width="3" height="3" fill="#8d5a48"/>
<rect x="323" y="879" width="3" height="3" fill="#3a4c82"/>
<rect x="326" y="879" width="3" height="3" fill="rgb(184,184,189)"/>
<rect x="329" y="879" width="3" height="3" fill="rgb(222,222,227)"/>
<rect x="332" y="879" width="3" height="3" fill="rgb(209,209,214)"/>
<rect x="284" y="882" width="3" height="3" fill="rgb(185,185,190)"/>
<rect x="287" y="882" width="3" height="3" fill="rgb(216,216,221)"/>
<rect x="290" y="882" width="3" height="3" fill="#a06a55"/>
<rect x="293" y="882" width="3" height="3" fill="#8d5a48"/>
<rect x="296" y="882" width="3" height="3" fill="#a06a55"/>
<rect x="299" y="882" width="3" height="3" fill="#23305e"/>
<rect x="302" y="882" width="3" height="3" fill="#7c4e3f"/>
<rect x="305" y="882" width="3" height="3" fill="#1e2a55"/>
<rect x="308" y="882" width="3" height="3" fill="#23305e"/>
<rect x="311" y="882" width="3" height="3" fill="#2d3f73"/>
<rect x="314" y="882" width="3" height="3" fill="#1e2a55"/>
<rect x="317" y="882" width="3" height="3" fill="#1e2a55"/>
<rect x="320" y="882" width="3" height="3" fill="#2d3f73"/>
<rect x="323" y="882" width="3" height="3" fill="#3a4c82"/>
<rect x="326" y="882" width="3" height="3" fill="rgb(185,185,190)"/>
<rect x="329" y="882" width="3" height="3" fill="rgb(217,217,222)"/>
<rect x="332" y="882" width="3" height="3" fill="rgb(215,215,220)"/>
<rect x="284" y="885" width="3" height="3" fill="rgb(195,195,200)"/>
<rect x="287" y="885" width="3" height="3" fill="rgb(186,186,191)"/>
<rect x="290" y="885" width="3" height="3" fill="#23305e"/>
<rect x="293" y="885" width="3" height="3" fill="#7c4e3f"/>
<rect x="296" y="885" width="3" height="3" fill="#3a4c82"/>
<rect x="299" y="885" width="3" height="3" fill="#8d5a48"/>
<rect x="302" y="885" width="3" height="3" fill="#1e2a55"/>
<rect x="305" y="885" width="3" height="3" fill="#8d5a48"/>
<rect x="308" y="885" width="3" height="3" fill="#a06a55"/>
<rect x="311" y="885" width="3" height="3" fill="#7c4e3f"/>
<rect x="314" y="885" width="3" height="3" fill="#1e2a55"/>
<rect x="317" y="885" width="3" height="3" fill="#3a4c82"/>
<rect x="320" y="885" width="3" height="3" fill="#a06a55"/>
<rect x="323" y="885" width="3" height="3" fill="#a06a55"/>
<rect x="326" y="885" width="3" height="3" fill="rgb(217,217,222)"/>
<rect x="329" y="885" width="3" height="3" fill="rgb(171,171,176)"/>
<rect x="332" y="885" width="3" height="3" fill="rgb(174,174,179)"/>
<rect x="284" y="888" width="3" height="3" fill="rgb(187,187,192)"/>
<rect x="287" y="888" width="3" height="3" fill="rgb(196,196,201)"/>
<rect x="290" y="888" width="3" height="3" fill="#7c4e3f"/>
<rect x="293" y="888" width="3" height="3" fill="#a06a55"/>
<rect x="296" y="888" width="3" height="3" fill="#2d3f73"/>
<rect x="299" y="888" width="3" height="3" fill="#2d3f73"/>
<rect x="302" y="888" width="3" height="3" fill="#8d5a48"/>
<rect x="305" y="888" width="3" height="3" fill="#3a4c82"/>
<rect x="308" y="888" width="3" height="3" fill="#d8d8e0"/>
<rect x="311" y="888" width="3" height="3" fill="#8d5a48"/>
<rect x="314" y="888" width="3" height="3" fill="#1e2a55"/>
<rect x="317" y="888" width="3" height="3" fill="#d8d8e0"/>
<rect x="320" y="888" width="3" height="3" fill="#8d5a48"/>
<rect x="323" y="888" width="3" height="3" fill="#7c4e3f"/>
<rect x="326" y="888" width="3" height="3" fill="rgb(191,191,196)"/>
<rect x="329" y="888" width="3" height="3" fill="rgb(212,212,217)"/>
<rect x="332" y="888" width="3" height="3" fill="rgb(216,216,221)"/>
<rect x="284" y="891" width="3" height="3" fill="rgb(214,214,219)"/>
<rect x="287" y="891" width="3" height="3" fill="rgb(203,203,208)"/>
<rect x="290" y="891" width="3" height="3" fill="#8d5a48"/>
<rect x="293" y="891" width="3" height="3" fill="#2d3f73"/>
<rect x="296" y="891" width="3" height="3" fill="#2d3f73"/>
<rect x="299" y="891" width="3" height="3" fill="#7c4e3f"/>
<rect x="302" y="891" width="3" height="3" fill="#d8d8e0"/>
<rect x="305" y="891" width="3" height="3" fill="#3a4c82"/>
<rect x="308" y="891" width="3" height="3" fill="#2d3f73"/>
<rect x="311" y="891" width="3" height="3" fill="#2d3f73"/>
<rect x="314" y="891" width="3" height="3" fill="#1e2a55"/>
<rect x="317" y="891" width="3" height="3" fill="#7c4e3f"/>
<rect x="320" y="891" width="3" height="3" fill="#1e2a55"/>
<rect x="323" y="891" width="3" height="3" fill="#3a4c82"/>
<rect x="326" y="891" width="3" height="3" fill="rgb(190,190,195)"/>
<rect x="329" y="891" width="3" height="3" fill="rgb(178,178,183)"/>
<rect x="332" y="891" width="3" height="3" fill="rgb(174,174,179)"/>
</svg>
<!-- bottom strip -->
<div class="abs" style="left:222px;top:892px;width:1378px;height:8px;background:#f0f2f5"></div>
</body></html>
